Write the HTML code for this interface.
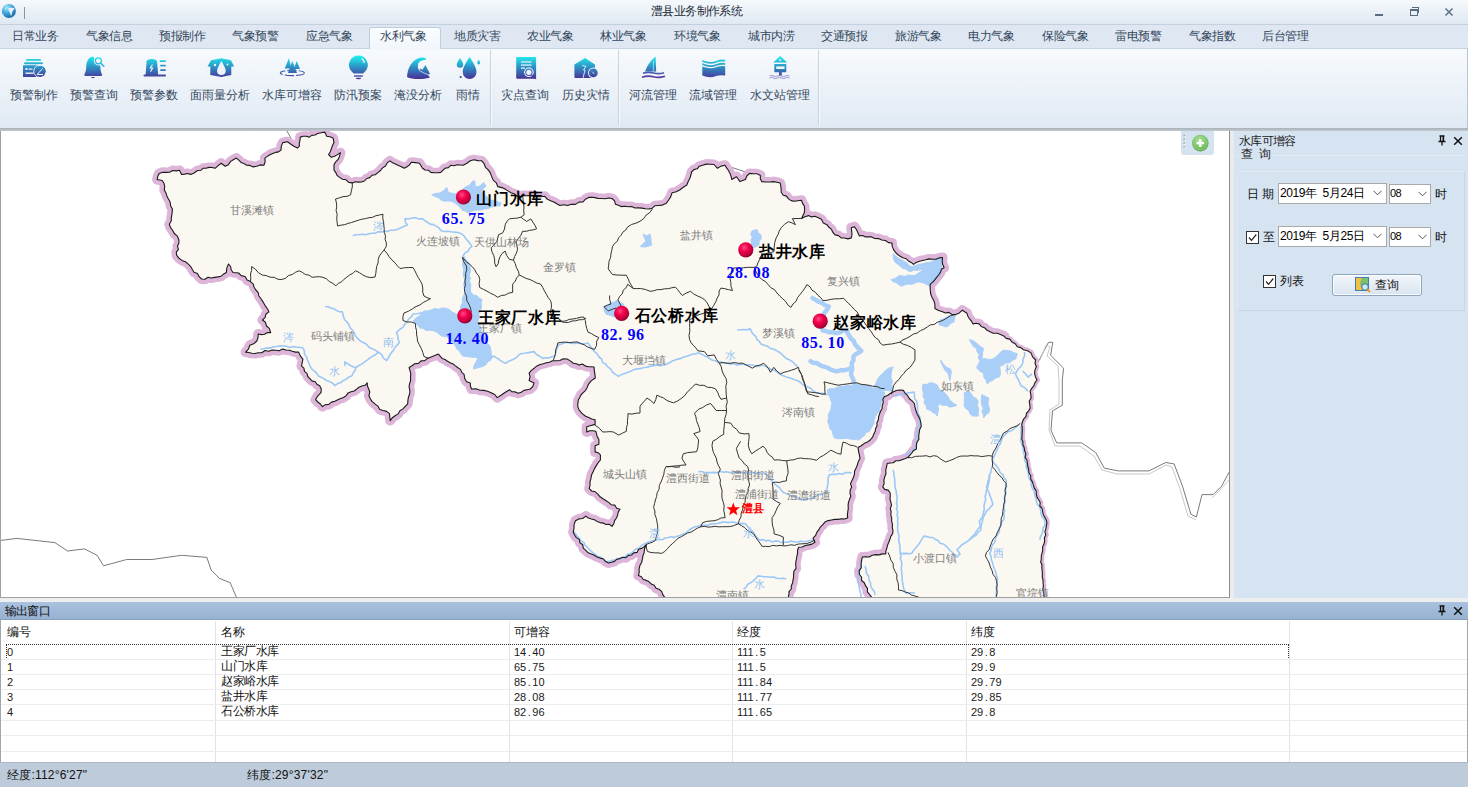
<!DOCTYPE html>
<html><head><meta charset="utf-8">
<style>
*{margin:0;padding:0;box-sizing:border-box}
html,body{width:1468px;height:787px;overflow:hidden;background:#fff;font-family:"Liberation Sans",sans-serif;font-size:12px;color:#1e2a3a}
.a{position:absolute;white-space:nowrap}
#title{left:0;top:0;width:1468px;height:25px;background:linear-gradient(#f6f9fc,#dfe8f2);border-bottom:1px solid #c3d0de}
#tabs{left:0;top:25px;width:1468px;height:23px;background:#dfe8f2}
.tab{top:28px;height:17px;line-height:17px;color:#33465c;font-size:12px;letter-spacing:-0.5px}
#acttab{left:369px;top:27px;width:72px;height:22px;background:linear-gradient(#fbfdff,#f1f6fb);border:1px solid #bfcddc;border-bottom:none;border-radius:3px 3px 0 0}
#ribbon{left:0;top:48px;width:1468px;height:81px;background:linear-gradient(#f7fafd,#e0e9f3);border-top:1px solid #c6d3e0;border-right:1px solid #b9c6d4}
.sep{top:50px;width:2px;height:76px;background:linear-gradient(90deg,#c9d4e0 50%,#f6f9fc 50%)}
.lbl{top:87px;height:17px;line-height:17px;color:#34475d;font-size:12px;text-align:center;width:80px;margin-left:-40px}
.ico{width:28px;height:28px;margin-left:-14px;top:54px}
#rbbot{left:0;top:128px;width:1468px;height:3px;background:linear-gradient(#a8b0b9,#c3c9cf)}
#map{left:0;top:131px;width:1230px;height:467px;background:#fff;border-left:1px solid #a0a0a0;border-bottom:1px solid #a0a0a0;border-right:1px solid #8c8c8c;overflow:hidden}
#rpanel{left:1230px;top:131px;width:238px;height:467px;background:#d6e3f1;border-left:4px solid #e9ecef}
#gap{left:0;top:598px;width:1468px;height:4px;background:#eceef0}
#outt{left:0;top:602px;width:1468px;height:18px;background:linear-gradient(#a9c2de,#97b1d1);border-bottom:1px solid #8a9fb8}
#tbl{left:0;top:620px;width:1468px;height:142px;background:#fff;border-left:1px solid #9ba7b4;border-right:1px solid #9ba7b4}
#status{left:0;top:762px;width:1468px;height:25px;background:#bdcbdb;border-top:1px solid #a9b7c6}
.cell{font-size:12px;color:#111;height:15px;line-height:15px}
.num{font-family:"Liberation Sans",sans-serif;font-size:11px;color:#1a1a1a;height:15px;line-height:15px;letter-spacing:0px}
.ml{font-size:11px;color:#7b7b7b}
.rl{font-size:16px;font-weight:bold;color:#000;font-family:"Liberation Serif",serif}
.rv{font-size:16px;font-weight:bold;color:#0000ff;font-family:"Liberation Serif",serif}
</style></head><body>
<div id="title" class="a"></div>
<div class="a" style="left:651px;top:3px;height:17px;line-height:17px;font-size:12px;color:#222c38;letter-spacing:-0.6px">澧县业务制作系统</div>
<svg class="a" style="left:1px;top:3px" width="16" height="16" viewBox="0 0 16 16"><defs><radialGradient id="gl" cx="0.35" cy="0.25" r="0.85"><stop offset="0" stop-color="#a8e6fc"/><stop offset="0.5" stop-color="#3aa3dc"/><stop offset="1" stop-color="#145d9a"/></radialGradient></defs><circle cx="7.9" cy="8" r="7" fill="url(#gl)"/><path d="M7.3 5.2 Q9.5 4.2 11.5 5 L13.6 4.4 Q13.4 6.3 12.3 7.2 Q11.2 8.4 10.9 10.2 Q10.6 12 10.1 13.1 Q9.3 11 8.8 9.7 Q8.6 8.6 7.9 8.1 Q6.9 7.3 7.6 6.4Z" fill="#f2f7fa" opacity="0.92"/><path d="M1.2 11 Q2.5 11.2 3.4 12.3 Q2.4 12.8 1.7 12.2Z" fill="#f2f7fa" opacity="0.8"/><circle cx="4.3" cy="6.2" r="0.6" fill="#e8f4fb" opacity="0.6"/></svg>
<div class="a" style="left:24px;top:7px;width:1px;height:12px;background:#8a96a3"></div>
<div class="a" style="left:1375px;top:14px;width:8px;height:2px;background:#5a6b7e"></div>
<div class="a" style="left:1410px;top:9px;width:8px;height:7px;border:1px solid #5a6b7e;border-top-width:2px"></div>
<div class="a" style="left:1412px;top:7px;width:7px;height:6px;border-top:1px solid #5a6b7e;border-right:1px solid #5a6b7e"></div>
<svg class="a" style="left:1444px;top:7px" width="10" height="10" viewBox="0 0 10 10"><path d="M1.5 1.5L8.5 8.5M8.5 1.5L1.5 8.5" stroke="#5f7186" stroke-width="1.5"/></svg>
<div id="tabs" class="a"></div>
<div id="acttab" class="a"></div>
<div class="a tab" style="left:12px">日常业务</div>
<div class="a tab" style="left:86px">气象信息</div>
<div class="a tab" style="left:159px">预报制作</div>
<div class="a tab" style="left:232px">气象预警</div>
<div class="a tab" style="left:306px">应急气象</div>
<div class="a tab" style="left:380px">水利气象</div>
<div class="a tab" style="left:454px">地质灾害</div>
<div class="a tab" style="left:527px">农业气象</div>
<div class="a tab" style="left:600px">林业气象</div>
<div class="a tab" style="left:674px">环境气象</div>
<div class="a tab" style="left:748px">城市内涝</div>
<div class="a tab" style="left:821px">交通预报</div>
<div class="a tab" style="left:895px">旅游气象</div>
<div class="a tab" style="left:968px">电力气象</div>
<div class="a tab" style="left:1042px">保险气象</div>
<div class="a tab" style="left:1115px">雷电预警</div>
<div class="a tab" style="left:1189px">气象指数</div>
<div class="a tab" style="left:1262px">后台管理</div>
<div id="ribbon" class="a"></div>
<div class="a lbl" style="left:34px">预警制作</div>
<div class="a lbl" style="left:94.3px">预警查询</div>
<div class="a lbl" style="left:154.3px">预警参数</div>
<div class="a lbl" style="left:220px">面雨量分析</div>
<div class="a lbl" style="left:292px">水库可增容</div>
<div class="a lbl" style="left:357.6px">防汛预案</div>
<div class="a lbl" style="left:418px">淹没分析</div>
<div class="a lbl" style="left:468px">雨情</div>
<div class="a lbl" style="left:525.3px">灾点查询</div>
<div class="a lbl" style="left:585.6px">历史灾情</div>
<div class="a lbl" style="left:653px">河流管理</div>
<div class="a lbl" style="left:713.3px">流域管理</div>
<div class="a lbl" style="left:779.7px">水文站管理</div>
<div class="a sep" style="left:490px"></div>
<div class="a sep" style="left:618px"></div>
<div class="a sep" style="left:818px"></div>
<svg class="a" style="left:0;top:0" width="830" height="128" viewBox="0 0 830 128">
<defs>
<linearGradient id="ig" x1="0" y1="0" x2="0" y2="1"><stop offset="0" stop-color="#1ff0ee"/><stop offset="0.5" stop-color="#2e8ec4"/><stop offset="1" stop-color="#4a2e94"/></linearGradient>
<linearGradient id="igu" gradientUnits="userSpaceOnUse" x1="0" y1="56" x2="0" y2="79"><stop offset="0" stop-color="#1ff0ee"/><stop offset="0.5" stop-color="#2e8ec4"/><stop offset="1" stop-color="#4a2e94"/></linearGradient>
</defs>
<g fill="url(#igu)">
<!-- 1 预警制作 -->
<rect x="26" y="59" width="15" height="1.8" rx="0.9"/>
<rect x="24" y="62.2" width="19" height="2" rx="1"/>
<path d="M23 65.2 H38 V77 H23 Z"/>
<circle cx="40.2" cy="71.3" r="5.6"/>
<g fill="#eef4fa"><rect x="25.5" y="68" width="2" height="2"/><rect x="28.5" y="68.5" width="4" height="1.2"/><rect x="25.5" y="72.5" width="8" height="1.4"/></g>
<path d="M37.3 74.3 L42.5 68.5 M37 74.5 H43" stroke="#eef4fa" stroke-width="1" fill="none"/>
<circle cx="40.2" cy="71.3" r="6.4" fill="none" stroke="#f2f6fb" stroke-width="0.9"/>
<!-- 2 预警查询 bell -->
<path d="M93 56.6 C88 57.5 86.5 62 86.3 66 C86.2 70 85.5 72.5 84.4 74.2 C84 75 84.5 75.9 85.5 75.9 H101 C102 75.9 102.4 75 102 74.2 C101 72.5 100.4 70 100.3 66 Z"/>
<path d="M91 77 H95 C94.5 78.5 91.5 78.5 91 77Z"/>
<circle cx="98.4" cy="60.8" r="4.6" fill="#f2f6fb"/>
<circle cx="98.4" cy="60.8" r="3.6"/>
<circle cx="98.4" cy="60.8" r="2.4" fill="#f2f6fb"/>
<path d="M100.8 63.2 L104.3 66.7" stroke="#2ab6d6" stroke-width="1.6"/>
<!-- 3 预警参数 -->
<path d="M145.6 75 L146.5 62 C146.8 59.8 148.5 59 151.8 59 C155 59 156.8 59.8 157.1 62 L158.2 75 Z"/>
<rect x="143.5" y="74.6" width="22.5" height="1.9" rx="0.9"/>
<rect x="159.6" y="60.3" width="6.4" height="1.7" rx="0.8"/>
<rect x="160" y="64.7" width="6" height="1.7" rx="0.8"/>
<rect x="160" y="69.2" width="6" height="1.7" rx="0.8"/>
<path d="M152.5 64.5 L150.3 68 L152.6 68 L150.5 71.8" stroke="#eef4fa" stroke-width="1.1" fill="none"/>
<!-- 4 面雨量分析 -->
<path d="M207.5 66.5 L211 60.2 L221.4 58.3 L231 60.2 L234.2 66.5 L231.3 66.5 L231.3 75 L221.4 77 L210.3 75 L210.3 66.5 Z"/>
<path d="M221.4 61 C219 65.5 217 68.5 217 71 C217 73.5 219 75 221.4 75 C223.8 75 225.8 73.5 225.8 71 C225.8 68.5 223.8 65.5 221.4 61Z" fill="#eef4fa"/>
<circle cx="215" cy="65" r="1.2" fill="#eef4fa"/><circle cx="227.5" cy="64.5" r="1" fill="#eef4fa"/>
<!-- 5 水库可增容 trees -->
<path d="M288.9 58.3 L284.7 68.5 H291.5 Z"/>
<path d="M296.7 61 L293.7 69 H300 Z"/>
<path d="M292.3 61 L288 73 H297 Z"/>
<ellipse cx="292.3" cy="73" rx="12" ry="2.6" fill="none" stroke="url(#igu)" stroke-width="1.1" stroke-dasharray="9 2"/>
<!-- 6 防汛预案 bulb -->
<path d="M358.4 55.5 A9.4 9.4 0 0 1 365.5 71 L363.2 73.4 H353.6 L351.3 71 A9.4 9.4 0 0 1 358.4 55.5Z"/>
<rect x="354" y="75.3" width="8.9" height="1.4"/>
<path d="M356 77.8 H361 V78.5 C360 79.6 357 79.6 356 78.5Z"/>
<path d="M361.5 58.7 Q364.2 60 364.3 63" stroke="#f2f6fb" stroke-width="1.2" fill="none"/>
<!-- 7 淹没分析 wave -->
<path d="M407 77 C407.5 68 412 59 421 57.5 C424 57 426.5 58.2 426.2 59.6 C424 60.2 420 60.5 418.2 63.5 C417.6 66 417.8 68.5 419 70 L421 68.5 L422.2 70 L425.5 65 L430 74 L428 75 L430 77.5 C422 79.8 412 79.5 407 77Z"/>
<path d="M419 70.3 Q424 73.5 429.5 75.2" stroke="#eef4fa" stroke-width="0.7" fill="none"/>
<!-- 8 雨情 -->
<path d="M469.6 56.9 C466 62.5 462.7 67.5 462.7 72 A6.9 6.9 0 0 0 476.5 72 C476.5 67.5 473.2 62.5 469.6 56.9Z"/>
<path d="M460 58 C458.5 60.5 456.8 62.5 456.8 64.5 A3.2 3.2 0 0 0 463.2 64.5 C463.2 62.5 461.5 60.5 460 58Z"/>
<path d="M478.7 59.8 C478 61 477.3 62 477.3 63 A1.4 1.4 0 0 0 480.1 63 C480.1 62 479.4 61 478.7 59.8Z"/>
<circle cx="460.7" cy="77" r="1.1"/>
<!-- 9 灾点查询 -->
<rect x="516.2" y="56.9" width="19.9" height="21.9" rx="1.2"/>
<g fill="#dff0f8"><rect x="521" y="61.3" width="10.5" height="1.3"/><rect x="521" y="64.4" width="10.5" height="1.3"/><rect x="521" y="67.5" width="4" height="1.3"/></g>
<circle cx="528.9" cy="72.3" r="4.8" fill="#eef4fa"/>
<circle cx="528.9" cy="72.3" r="3.7"/>
<circle cx="528.9" cy="72.3" r="2.6" fill="#eef4fa"/>
<path d="M531.5 75 L536 78.8" stroke="#4a3a96" stroke-width="1.4"/>
<!-- 10 历史灾情 -->
<path d="M585 58 L595 64.5 V76.5 C595 77.5 594.5 78 593.5 78 H575.8 C574.9 78 574.4 77.5 574.4 76.5 V64.5 Z"/>
<circle cx="593.3" cy="72.9" r="5.3" fill="#eef4fa"/>
<circle cx="593.3" cy="72.9" r="4.4"/>
<path d="M582.3 65.5 L586 66.3 L583.5 70 L585 70.3 L583 77.8" stroke="#eef4fa" stroke-width="0.9" fill="none"/>
<path d="M592 71.5 L594.3 74" stroke="#eef4fa" stroke-width="0.8"/>
<!-- 11 河流管理 sailboat -->
<path d="M655.6 56.6 L656.2 71.5 H645 C647 66 650.5 60.5 655.6 56.6Z"/>
<path d="M653.5 61 L653.3 71" stroke="#dff1f8" stroke-width="0.8" opacity="0.8"/>
<path d="M643 73.3 Q648 71.5 653.5 73 Q659 74.5 664 72.8" stroke="#4a5cb0" stroke-width="1.7" fill="none"/>
<path d="M642 77.2 Q648 75.2 653.5 76.8 Q659 78.3 665 76.3" stroke="#5a3ca0" stroke-width="1.7" fill="none"/>
<!-- 12 流域管理 -->
<path d="M702.3 60 Q710 63.5 716 61 Q721 59 725.2 59.8 V61.6 Q720 61 716 62.8 Q710 65.2 702.3 62Z"/>
<path d="M702.3 63.2 Q710 66.5 716 64.2 Q721 62.3 725.2 63 V64.8 Q720 64.2 716 66 Q710 68.3 702.3 65Z"/>
<path d="M702.3 66.5 Q710 69.6 716 67.3 Q721 65.5 725.2 66.2 V75.5 Q720 74.8 716 76 Q710 78.8 702.3 75.5Z"/>
<!-- 13 水文站管理 -->
<path d="M780.2 56 L787.2 62.5 H773.2 Z"/>
<circle cx="780.2" cy="60" r="1" fill="#eef4fa"/>
<rect x="774.3" y="64" width="12" height="8.2" rx="0.6"/>
<rect x="776.2" y="66.4" width="8.4" height="2.6" fill="#eef4fa"/>
<rect x="779" y="72" width="2.8" height="3.5"/>
<path d="M769.5 76 Q771.5 74.8 773.5 76 T777.5 76 T781.5 76 T785.5 76 T789.5 76" stroke="#7a6cc0" stroke-width="0.9" fill="none" opacity="0.8"/>
<path d="M769.5 78 Q771.5 76.8 773.5 78 T777.5 78 T781.5 78 T785.5 78 T789.5 78" stroke="#7a6cc0" stroke-width="0.9" fill="none" opacity="0.8"/>
</g>
</svg>
<div id="rbbot" class="a"></div>
<div class="a" style="left:370px;top:47px;width:70px;height:3px;background:#f3f7fb"></div>
<div id="map" class="a"></div>
<svg class="a" style="left:1px;top:131px" width="1228" height="466" viewBox="1 131 1228 466">
<defs><radialGradient id="ball" cx="0.38" cy="0.35" r="0.8" fx="0.4" fy="0.35"><stop offset="0" stop-color="#ff4a80"/><stop offset="0.35" stop-color="#f2004c"/><stop offset="0.7" stop-color="#b8003a"/><stop offset="1" stop-color="#5a0018"/></radialGradient></defs>
<polyline points="0.0,540.5 16.9,538.4 54.9,542.6 67.6,551.0 84.5,548.9 97.1,555.3 103.5,565.8 126.7,559.5 152.0,559.5 181.6,555.3 206.9,557.4 211.1,570.0 219.6,578.5 230.2,582.7 236.5,597.5" fill="none" stroke="#7a7a7a" stroke-width="1"/>
<polyline points="1037.7,362.8 1048.5,342.3 1052.8,342.3 1050.6,355.3 1063.6,368.2 1062.3,380.0 1062.3,405.2 1052.5,410.8 1051.0,430.3 1056.7,442.9 1081.8,442.9 1095.8,452.7 1104.2,468.1 1118.2,470.9 1148.9,470.9 1165.7,462.5 1174.1,463.9 1182.5,486.2 1190.9,514.2 1196.4,517.0 1202.0,494.6 1213.2,494.6 1221.6,486.2 1229.0,472.3" fill="none" stroke="#7a7a7a" stroke-width="1"/>
<polyline points="286.9,131.0 291.2,138.6" fill="none" stroke="#7a7a7a" stroke-width="1"/>
<polyline points="725.0,165.2 761.0,177.0" fill="none" stroke="#7a7a7a" stroke-width="1"/>
<polyline points="334.0,170.1 337.0,177.0 341.0,181.0 347.0,183.5" fill="none" stroke="#7a7a7a" stroke-width="1"/>
<polyline points="1040.0,360.0 1046.0,345.0 1050.0,347.0 1047.0,356.0 1058.0,366.0 1059.0,380.0 1059.0,404.0 1050.0,410.0 1049.0,430.0 1055.0,446.0 1080.0,446.0 1094.0,456.0 1102.0,470.0 1117.0,474.0 1149.0,474.0 1166.0,465.0 1172.0,467.0 1180.0,489.0 1188.0,516.0 1196.0,520.0" fill="none" stroke="#c8c8c8" stroke-width="1"/>
<polyline points="1212.0,498.0 1220.0,490.0 1229.0,480.0" fill="none" stroke="#c8c8c8" stroke-width="1"/>
<polyline points="1043.7,602.7 1045.3,606.3 1045.0,610.0 1042.0,609.9 1039.0,609.1 1035.9,609.3 1032.9,610.7 1029.9,610.8 1026.9,610.1 1023.8,610.9 1020.8,610.5 1017.8,610.9 1014.8,609.7 1011.7,609.4 1008.7,609.2 1005.7,610.7 1002.7,609.6 999.6,609.7 996.6,610.7 993.6,609.2 990.6,609.1 987.5,610.6 984.5,609.1 981.5,610.2 978.5,610.0 975.4,609.0 972.4,609.3 969.4,610.7 966.4,610.1 963.3,610.0 960.3,610.3 957.3,610.6 954.3,610.4 951.2,609.6 948.2,611.0 945.2,609.9 942.2,610.1 939.1,611.0 936.1,610.3 933.1,609.8 930.1,610.0 927.0,610.9 924.0,609.0 921.0,609.4 918.0,609.1 914.9,610.8 911.9,610.5 908.9,610.9 905.9,609.4 902.8,610.5 899.8,610.7 896.8,610.2 893.8,609.2 890.7,609.4 887.7,610.5 884.7,610.7 881.7,609.2 878.6,609.9 875.6,609.6 872.6,610.0 871.8,606.7 871.7,603.3 872.6,600.0 871.5,597.0 869.5,594.4 867.4,591.9 867.5,588.3 865.5,585.7 864.3,582.7 861.6,580.5 861.5,577.0 859.4,574.5 859.1,570.9 861.3,567.6 861.1,564.0 861.5,560.4 862.4,557.0 865.7,556.7 869.2,557.0 872.3,555.3 875.6,554.6 879.0,554.9 882.3,553.9 885.7,554.0 885.9,550.9 886.9,548.0 887.6,545.0 888.8,542.2 889.9,539.3 890.8,536.4 892.6,533.8 893.0,530.7 892.3,527.6 892.5,524.4 891.6,521.2 891.7,518.1 890.8,514.9 891.1,511.7 890.3,508.6 891.5,505.3 890.9,502.2 890.0,499.1 890.3,495.9 890.1,492.7 888.2,490.1 884.7,489.4 882.8,486.9 884.1,483.7 883.9,480.2 884.7,476.9 886.0,473.7 885.7,470.1 886.6,466.8 887.2,463.5 890.2,463.0 893.3,462.7 895.9,460.7 899.0,460.8 901.9,459.7 904.8,458.7 907.6,457.6 909.7,455.3 911.8,453.0 913.6,450.4 916.4,448.9 916.4,445.5 916.9,442.3 918.9,439.4 918.7,435.9 919.2,432.7 919.7,429.4 921.2,426.4 920.9,422.9 920.0,419.6 918.6,416.5 916.9,413.4 915.8,410.2 915.0,406.9 914.4,403.5 912.1,400.9 909.4,398.7 907.7,395.7 905.2,393.3 903.3,390.4 899.7,390.0 896.3,390.5 893.0,391.9 890.2,393.4 887.6,395.5 884.6,396.6 882.8,399.2 883.3,402.5 882.3,405.4 882.1,408.5 880.5,411.2 879.5,414.0 878.6,416.9 878.3,420.0 876.9,422.7 877.0,425.9 875.6,428.6 875.1,431.6 873.6,434.4 872.6,437.2 870.2,440.0 867.3,442.1 864.1,443.6 861.2,445.8 858.0,447.4 858.5,451.1 859.3,454.7 860.0,458.4 858.4,461.4 857.4,464.7 856.1,467.9 854.6,471.0 854.4,474.5 853.3,477.8 851.8,480.9 850.5,483.8 851.7,487.1 850.2,490.0 850.0,493.1 850.8,496.3 849.5,499.3 848.5,502.3 848.1,505.4 848.3,508.5 847.8,511.5 847.4,514.6 847.7,517.7 844.6,519.0 841.3,518.8 838.1,519.4 834.7,519.4 831.5,520.0 828.3,520.6 825.2,521.8 823.0,524.4 820.5,526.8 818.8,529.7 816.8,532.4 815.5,535.7 813.0,538.1 815.0,542.2 812.0,544.1 808.7,544.9 805.3,545.5 802.2,547.0 798.7,547.3 797.5,550.2 797.6,553.2 796.9,556.2 796.4,559.2 795.8,562.2 795.7,565.2 796.1,568.4 794.0,571.1 793.6,574.1 793.6,577.1 793.0,580.1 792.6,583.1 791.3,585.8 791.3,589.0 789.1,591.4 788.9,594.5 788.2,597.5 786.4,600.0 786.9,603.3 785.9,606.7 786.4,610.0 783.4,610.6 780.3,609.5 777.3,609.0 774.2,610.0 771.2,610.2 768.1,610.0 765.1,609.6 762.1,609.5 759.0,609.8 756.0,609.7 752.9,610.8 749.9,610.7 746.8,610.5 743.8,609.5 740.8,610.4 737.7,609.9 734.7,611.0 731.6,610.9 728.6,610.5 725.5,609.7 722.5,609.6 719.5,609.6 716.4,610.4 713.4,610.0 710.3,610.1 707.3,610.1 704.3,610.8 701.2,609.2 698.2,610.6 695.1,609.0 692.1,609.1 689.0,611.0 686.0,610.1 683.0,609.4 679.9,609.1 676.9,610.1 673.8,610.5 670.8,610.6 667.7,609.1 664.7,610.0 664.1,606.8 664.9,603.6 664.0,600.5 664.7,597.3 662.8,594.6 661.6,591.4 659.0,589.3 656.0,588.2 654.2,585.3 651.3,584.1 649.1,581.8 646.4,580.4 643.3,579.5 641.4,576.7 638.4,575.6 639.2,572.3 639.1,568.8 639.9,565.5 641.6,562.5 642.4,559.2 642.9,555.9 644.1,552.7 644.6,548.5 646.4,544.7 644.1,546.7 641.6,548.4 638.6,549.3 637.0,552.4 633.7,552.9 631.5,555.0 628.4,555.4 626.0,557.7 622.6,557.2 619.9,558.6 616.9,559.2 614.5,561.4 611.5,562.2 608.6,563.0 605.6,561.6 603.4,559.0 600.1,558.1 597.1,556.9 594.3,555.3 591.3,553.9 588.2,552.8 585.8,550.4 583.3,548.2 582.8,544.8 580.0,542.8 579.3,539.4 576.4,537.6 574.6,535.0 573.2,532.1 574.0,528.3 574.1,524.4 575.5,520.7 578.8,518.9 582.7,518.5 585.8,516.1 588.4,518.0 591.4,519.0 594.4,519.8 597.1,521.4 600.0,522.6 603.2,523.1 606.0,524.5 609.4,524.4 612.0,526.4 613.8,523.7 614.6,520.6 616.5,518.0 617.6,515.1 618.3,511.9 620.0,509.2 616.7,508.3 614.7,505.1 611.1,504.7 608.6,502.4 605.8,500.5 602.9,498.7 600.1,496.8 597.8,494.1 595.3,491.8 591.7,491.0 589.2,488.6 590.1,485.2 590.0,481.7 591.0,478.3 591.5,474.9 593.1,471.8 594.5,468.6 596.3,465.6 598.1,462.7 600.4,460.0 600.4,454.9 598.1,452.7 595.1,451.9 595.1,448.9 595.1,445.8 598.9,444.2 598.9,439.7 596.9,435.7 595.9,431.3 592.8,430.7 589.7,430.8 586.7,432.0 586.7,426.7 590.9,425.5 595.1,424.4 595.1,419.8 591.7,419.0 588.7,417.5 585.6,416.3 582.9,414.1 580.6,411.9 578.7,409.2 577.7,406.2 577.9,403.1 578.3,400.0 579.5,398.0 580.9,395.0 583.2,392.6 585.6,390.3 587.2,387.4 588.4,384.3 590.4,381.7 592.7,379.7 595.3,378.0 594.9,374.3 594.3,370.7 594.1,367.0 591.1,366.8 588.0,366.8 585.1,365.9 582.4,364.0 579.1,365.1 576.3,363.8 573.3,363.3 570.3,360.9 567.1,359.0 563.3,358.7 559.8,360.5 556.1,360.8 552.4,360.8 549.5,362.2 546.4,362.8 543.3,363.7 540.2,364.5 536.9,365.9 534.2,368.2 531.4,370.4 529.1,373.1 530.1,376.8 529.1,380.5 534.0,382.9 532.9,386.4 530.3,389.0 527.1,389.7 523.9,390.4 521.2,392.3 518.1,393.3 515.3,391.9 512.0,391.8 509.5,389.7 504.6,392.7 501.0,395.3 497.2,397.6 494.7,394.5 491.1,392.7 487.6,391.3 483.9,390.4 480.1,390.3 475.9,388.7 471.5,389.0 470.4,386.0 470.3,382.9 466.6,381.7 464.6,378.3 464.1,374.3 461.7,372.3 460.5,369.4 457.9,367.8 455.4,365.9 453.1,363.9 450.2,362.7 447.5,361.3 445.0,359.5 442.1,358.4 438.4,354.1 434.8,355.6 431.0,356.9 427.4,358.4 424.8,360.7 421.0,360.9 418.5,363.4 414.8,363.7 412.0,365.7 409.1,367.5 410.0,370.7 410.8,373.9 410.5,377.3 410.6,380.7 409.5,383.9 409.1,387.2 409.9,390.6 409.6,394.0 408.4,397.2 407.9,400.5 407.7,403.8 405.3,406.3 402.9,408.9 399.9,410.7 398.1,413.9 395.1,415.8 392.3,417.8 390.2,420.6 389.8,417.1 389.5,413.6 386.6,411.4 383.1,410.5 379.7,409.4 377.9,406.1 374.8,403.9 372.0,401.4 370.0,398.3 368.9,395.3 369.8,392.0 368.7,389.0 367.4,386.0 367.2,382.9 365.0,385.3 361.9,386.0 359.0,387.2 356.6,389.1 354.1,391.0 351.0,391.8 348.1,392.9 346.1,395.6 343.6,397.5 340.6,398.5 337.8,399.7 334.8,401.2 331.5,402.1 328.8,404.4 325.2,404.7 322.4,406.6 320.4,404.0 317.8,402.0 315.5,399.7 317.8,395.8 321.0,392.7 321.3,389.0 319.7,385.7 317.0,384.3 315.2,381.7 312.0,380.9 309.9,378.7 307.8,376.5 307.0,373.4 304.5,371.4 303.9,368.1 301.5,366.1 302.2,362.6 302.9,359.1 300.3,355.9 298.7,352.1 295.5,352.1 292.4,351.2 289.3,350.2 286.1,350.0 282.6,349.1 279.1,350.7 275.6,350.2 272.1,350.0 268.7,351.3 265.0,350.5 261.8,352.8 258.2,352.8 255.0,353.5 251.9,353.3 248.7,352.5 245.6,352.1 248.4,349.1 249.8,345.2 253.7,343.8 256.8,341.0 258.0,337.6 258.2,334.0 261.4,334.6 264.5,334.2 267.5,332.6 270.7,332.6 269.3,328.4 266.5,326.0 265.4,322.2 262.4,320.0 265.0,317.6 266.0,314.0 268.9,311.9 267.6,309.0 265.6,306.4 264.1,303.7 262.4,300.9 260.6,298.3 258.8,295.7 258.1,292.4 255.8,290.0 254.1,287.2 253.1,283.8 250.5,281.6 247.1,280.1 245.1,276.5 241.2,275.6 238.6,273.0 233.0,272.5 231.2,269.8 230.6,266.5 228.5,264.0 226.8,268.1 226.4,272.5 223.6,274.1 221.1,276.2 217.8,276.9 214.6,277.4 211.4,278.0 208.0,277.3 204.9,279.2 201.6,279.0 199.1,276.7 197.5,273.5 194.0,272.3 192.2,269.3 190.5,266.3 188.1,263.9 185.4,261.8 182.0,260.4 179.0,258.2 176.7,255.3 176.3,252.1 178.4,249.3 177.5,246.1 178.9,243.1 178.9,240.0 177.4,236.2 174.3,233.5 172.4,230.0 170.4,227.3 169.3,224.2 171.2,220.9 171.4,217.1 172.1,213.1 172.4,209.0 170.6,205.8 170.1,202.0 168.3,198.8 166.9,195.9 165.8,192.8 164.3,190.0 164.7,186.4 164.0,183.3 162.2,180.5 157.1,179.5 157.8,176.3 159.2,173.4 162.7,172.2 166.3,172.4 169.6,172.2 172.8,170.5 176.2,170.9 179.5,170.3 181.5,174.4 184.6,174.1 187.6,173.5 190.7,174.4 194.1,173.0 197.1,170.8 200.8,170.3 202.9,168.3 205.9,168.2 209.0,167.4 212.1,167.5 215.1,168.3 218.1,165.6 221.2,163.2 225.2,166.3 228.4,164.8 230.4,161.6 233.3,159.7 236.4,158.1 238.8,160.1 241.0,162.4 244.0,163.6 246.6,165.2 250.0,165.4 253.2,166.9 256.7,166.3 260.2,164.9 263.9,165.2 265.1,161.7 264.9,158.1 267.4,156.4 269.9,154.8 272.6,153.4 275.5,152.4 278.6,151.9 281.0,150.0 281.3,146.1 282.8,142.6 287.4,141.7 290.6,144.0 293.9,146.2 297.4,148.1 299.3,146.3 299.3,143.2 300.0,140.2 300.2,137.1 303.2,136.2 306.3,136.2 309.3,137.1 311.8,135.4 315.0,135.0 317.6,133.5 321.2,132.7 324.9,132.1 326.7,136.2 330.0,136.8 333.1,138.1 334.0,142.6 332.5,145.5 331.4,148.6 330.3,151.7 328.6,154.5 331.3,157.3 334.6,156.3 337.5,154.6 340.4,152.7 339.5,156.4 338.1,159.4 335.7,161.8 334.0,164.6 334.0,170.1 335.8,172.6 337.1,175.4 339.5,177.4 342.5,179.2 346.1,179.8 348.7,182.4 352.3,182.9 355.3,181.8 358.4,182.1 361.5,182.0 364.5,181.0 366.7,178.5 369.7,177.6 372.0,175.3 375.2,174.7 377.9,172.6 380.5,170.5 382.6,167.9 385.5,166.0 387.2,162.9 389.9,160.9 392.6,162.7 395.5,164.0 398.4,165.5 401.4,166.7 404.2,168.3 407.0,166.8 409.5,164.9 411.3,162.2 415.4,162.6 419.5,163.2 422.5,168.3 425.1,170.0 428.4,170.2 430.7,172.4 434.1,172.8 437.4,172.7 440.8,172.4 444.9,168.3 448.4,167.6 451.0,165.2 454.1,165.8 457.1,164.8 460.1,165.0 463.2,165.2 466.9,163.2 470.3,160.7 474.0,159.7 477.8,160.6 481.5,160.7 484.1,163.7 485.5,167.3 488.2,169.9 490.3,172.9 491.6,176.4 493.2,180.1 496.3,182.8 497.7,186.6 502.0,187.6 505.9,189.6 510.9,192.7 514.0,193.8 516.7,196.0 520.0,196.7 523.2,195.5 526.7,195.8 530.0,195.5 533.7,195.8 537.3,196.6 541.0,196.7 544.7,196.2 547.1,199.1 550.5,200.8 553.8,202.0 556.8,203.8 559.8,205.5 563.6,204.8 567.6,205.5 571.4,204.3 575.4,204.4 579.0,202.1 583.0,202.0 585.4,199.2 588.7,197.4 591.9,197.2 595.0,197.6 598.0,198.5 601.5,198.5 605.0,198.7 608.5,198.0 612.0,198.5 614.6,200.9 615.4,204.3 618.4,205.3 621.2,206.6 624.7,206.3 628.1,206.7 631.6,206.6 635.0,208.0 638.5,207.9 642.0,208.1 645.5,208.8 649.0,209.0 652.2,208.2 654.8,205.8 658.2,205.5 662.5,205.1 666.3,203.2 668.7,200.0 670.8,196.6 672.1,192.7 676.3,191.8 680.0,189.7 683.3,187.2 686.8,185.0 688.3,181.2 690.2,177.5 691.6,172.0 693.9,169.6 697.2,168.8 699.3,166.2 702.5,165.2 706.3,164.1 710.1,164.2 714.0,164.5 717.5,168.3 721.0,166.1 725.0,165.2 726.6,167.9 728.5,170.5 730.0,173.4 731.1,176.3 731.8,179.5 736.5,176.8 740.0,181.6 745.4,179.5 746.8,176.0 749.5,173.4 753.2,173.8 756.9,173.8 760.4,175.4 760.3,178.7 761.7,181.6 765.8,182.0 770.0,182.0 773.5,181.6 776.8,182.2 780.2,183.0 780.8,186.0 781.1,189.1 781.2,192.2 783.2,195.2 786.4,196.1 788.5,198.9 791.1,200.6 794.4,201.3 797.9,200.7 801.5,200.3 802.6,203.4 804.4,206.2 804.6,209.5 804.3,212.8 802.8,215.7 801.5,218.6 804.9,216.7 808.6,215.6 811.5,216.9 814.9,216.3 817.8,217.6 821.4,219.2 823.3,223.0 826.9,224.7 828.9,227.3 831.5,229.4 832.9,232.4 835.0,234.9 838.5,235.6 841.1,237.9 844.5,238.0 847.9,238.9 851.3,237.9 852.0,234.5 851.7,231.2 851.3,227.8 854.3,226.7 856.4,229.5 857.9,232.7 859.4,235.9 862.5,235.5 865.5,236.9 868.5,236.7 871.6,236.9 874.8,238.5 878.5,238.6 881.8,240.0 885.4,240.5 888.4,242.6 892.0,243.0 892.2,246.4 893.5,249.4 895.3,252.2 897.6,254.5 900.2,256.2 902.9,257.8 906.1,258.7 908.4,260.9 911.1,262.4 913.6,264.4 916.3,262.4 919.4,261.2 922.6,260.5 925.8,259.8 929.1,258.9 932.5,259.3 935.9,259.3 939.1,257.9 942.5,257.5 942.2,261.0 942.6,264.3 944.1,267.5 941.4,269.3 940.4,272.4 938.6,275.0 936.6,277.4 934.7,279.8 932.7,282.2 930.3,284.2 930.1,287.2 930.3,290.3 930.7,294.0 932.0,297.4 933.8,300.6 934.9,304.1 934.9,308.6 938.6,310.4 942.5,311.7 945.4,313.0 948.8,312.4 951.6,314.3 954.7,314.7 959.0,313.2 962.4,310.2 966.9,313.2 967.9,316.2 969.5,318.8 971.5,321.2 973.0,323.9 976.0,323.3 979.1,323.9 981.3,326.4 984.4,327.7 986.8,330.0 990.0,331.7 993.3,333.2 997.1,333.3 1000.5,334.6 1003.7,335.9 1006.2,338.4" fill="none" stroke="#dcb5d8" stroke-width="10" stroke-linejoin="round"/>
<polyline points="1006.2,338.4 1009.7,339.1 1011.9,342.0 1015.2,343.8 1017.3,346.8 1020.7,347.6 1023.4,349.8 1027.5,350.7 1031.0,352.9 1032.6,356.9 1035.6,360.0 1035.0,363.4 1036.3,366.8 1034.9,370.1 1034.6,373.5 1035.5,376.9 1037.0,380.0 1035.0,382.6 1033.8,385.8 1031.7,388.3 1030.1,391.2 1030.8,394.6 1031.1,397.9 1029.2,401.3 1029.8,404.6 1030.1,408.0 1028.7,410.8 1026.5,413.2 1026.0,416.4 1023.8,418.8 1022.5,421.6 1021.7,424.7 1022.3,428.2 1022.2,431.7 1022.1,435.2 1021.7,438.7 1022.9,441.7 1022.9,444.9 1024.3,447.8 1024.7,451.0 1025.9,453.9 1025.1,457.4 1026.9,460.2 1027.4,463.3 1027.8,466.5 1028.7,469.5 1028.9,472.8 1030.7,475.7 1030.7,479.0 1032.4,481.9 1033.3,485.0 1034.3,488.1 1036.2,490.9 1036.3,494.3 1037.1,497.4 1038.8,500.0 1040.2,502.6 1039.8,506.0 1042.1,508.4 1042.6,511.4 1043.2,514.4 1044.6,517.0 1046.1,519.7 1046.9,522.6 1046.4,525.6 1045.9,528.6 1044.9,531.6 1045.8,534.8 1044.4,537.7 1044.6,540.8 1044.1,543.8 1042.6,546.7 1042.7,549.8 1042.1,552.8 1041.3,555.8 1041.3,558.9 1040.7,562.0 1041.9,565.0 1041.8,568.0 1042.2,571.0 1042.4,574.1 1042.3,577.1 1043.0,580.1 1043.1,583.2 1043.4,586.2 1042.8,589.3 1043.5,592.3 1044.1,595.3 1043.6,599.0 1043.7,602.7" fill="none" stroke="#dcb5d8" stroke-width="6" stroke-linejoin="round"/>
<polygon points="157.1,179.5 157.8,176.3 159.2,173.4 162.7,172.2 166.3,172.4 169.6,172.2 172.8,170.5 176.2,170.9 179.5,170.3 181.5,174.4 184.6,174.1 187.6,173.5 190.7,174.4 194.1,173.0 197.1,170.8 200.8,170.3 202.9,168.3 205.9,168.2 209.0,167.4 212.1,167.5 215.1,168.3 218.1,165.6 221.2,163.2 225.2,166.3 228.4,164.8 230.4,161.6 233.3,159.7 236.4,158.1 238.8,160.1 241.0,162.4 244.0,163.6 246.6,165.2 250.0,165.4 253.2,166.9 256.7,166.3 260.2,164.9 263.9,165.2 265.1,161.7 264.9,158.1 267.4,156.4 269.9,154.8 272.6,153.4 275.5,152.4 278.6,151.9 281.0,150.0 281.3,146.1 282.8,142.6 287.4,141.7 290.6,144.0 293.9,146.2 297.4,148.1 299.3,146.3 299.3,143.2 300.0,140.2 300.2,137.1 303.2,136.2 306.3,136.2 309.3,137.1 311.8,135.4 315.0,135.0 317.6,133.5 321.2,132.7 324.9,132.1 326.7,136.2 330.0,136.8 333.1,138.1 334.0,142.6 332.5,145.5 331.4,148.6 330.3,151.7 328.6,154.5 331.3,157.3 334.6,156.3 337.5,154.6 340.4,152.7 339.5,156.4 338.1,159.4 335.7,161.8 334.0,164.6 334.0,170.1 335.8,172.6 337.1,175.4 339.5,177.4 342.5,179.2 346.1,179.8 348.7,182.4 352.3,182.9 355.3,181.8 358.4,182.1 361.5,182.0 364.5,181.0 366.7,178.5 369.7,177.6 372.0,175.3 375.2,174.7 377.9,172.6 380.5,170.5 382.6,167.9 385.5,166.0 387.2,162.9 389.9,160.9 392.6,162.7 395.5,164.0 398.4,165.5 401.4,166.7 404.2,168.3 407.0,166.8 409.5,164.9 411.3,162.2 415.4,162.6 419.5,163.2 422.5,168.3 425.1,170.0 428.4,170.2 430.7,172.4 434.1,172.8 437.4,172.7 440.8,172.4 444.9,168.3 448.4,167.6 451.0,165.2 454.1,165.8 457.1,164.8 460.1,165.0 463.2,165.2 466.9,163.2 470.3,160.7 474.0,159.7 477.8,160.6 481.5,160.7 484.1,163.7 485.5,167.3 488.2,169.9 490.3,172.9 491.6,176.4 493.2,180.1 496.3,182.8 497.7,186.6 502.0,187.6 505.9,189.6 510.9,192.7 514.0,193.8 516.7,196.0 520.0,196.7 523.2,195.5 526.7,195.8 530.0,195.5 533.7,195.8 537.3,196.6 541.0,196.7 544.7,196.2 547.1,199.1 550.5,200.8 553.8,202.0 556.8,203.8 559.8,205.5 563.6,204.8 567.6,205.5 571.4,204.3 575.4,204.4 579.0,202.1 583.0,202.0 585.4,199.2 588.7,197.4 591.9,197.2 595.0,197.6 598.0,198.5 601.5,198.5 605.0,198.7 608.5,198.0 612.0,198.5 614.6,200.9 615.4,204.3 618.4,205.3 621.2,206.6 624.7,206.3 628.1,206.7 631.6,206.6 635.0,208.0 638.5,207.9 642.0,208.1 645.5,208.8 649.0,209.0 652.2,208.2 654.8,205.8 658.2,205.5 662.5,205.1 666.3,203.2 668.7,200.0 670.8,196.6 672.1,192.7 676.3,191.8 680.0,189.7 683.3,187.2 686.8,185.0 688.3,181.2 690.2,177.5 691.6,172.0 693.9,169.6 697.2,168.8 699.3,166.2 702.5,165.2 706.3,164.1 710.1,164.2 714.0,164.5 717.5,168.3 721.0,166.1 725.0,165.2 726.6,167.9 728.5,170.5 730.0,173.4 731.1,176.3 731.8,179.5 736.5,176.8 740.0,181.6 745.4,179.5 746.8,176.0 749.5,173.4 753.2,173.8 756.9,173.8 760.4,175.4 760.3,178.7 761.7,181.6 765.8,182.0 770.0,182.0 773.5,181.6 776.8,182.2 780.2,183.0 780.8,186.0 781.1,189.1 781.2,192.2 783.2,195.2 786.4,196.1 788.5,198.9 791.1,200.6 794.4,201.3 797.9,200.7 801.5,200.3 802.6,203.4 804.4,206.2 804.6,209.5 804.3,212.8 802.8,215.7 801.5,218.6 804.9,216.7 808.6,215.6 811.5,216.9 814.9,216.3 817.8,217.6 821.4,219.2 823.3,223.0 826.9,224.7 828.9,227.3 831.5,229.4 832.9,232.4 835.0,234.9 838.5,235.6 841.1,237.9 844.5,238.0 847.9,238.9 851.3,237.9 852.0,234.5 851.7,231.2 851.3,227.8 854.3,226.7 856.4,229.5 857.9,232.7 859.4,235.9 862.5,235.5 865.5,236.9 868.5,236.7 871.6,236.9 874.8,238.5 878.5,238.6 881.8,240.0 885.4,240.5 888.4,242.6 892.0,243.0 892.2,246.4 893.5,249.4 895.3,252.2 897.6,254.5 900.2,256.2 902.9,257.8 906.1,258.7 908.4,260.9 911.1,262.4 913.6,264.4 916.3,262.4 919.4,261.2 922.6,260.5 925.8,259.8 929.1,258.9 932.5,259.3 935.9,259.3 939.1,257.9 942.5,257.5 942.2,261.0 942.6,264.3 944.1,267.5 941.4,269.3 940.4,272.4 938.6,275.0 936.6,277.4 934.7,279.8 932.7,282.2 930.3,284.2 930.1,287.2 930.3,290.3 930.7,294.0 932.0,297.4 933.8,300.6 934.9,304.1 934.9,308.6 938.6,310.4 942.5,311.7 945.4,313.0 948.8,312.4 951.6,314.3 954.7,314.7 959.0,313.2 962.4,310.2 966.9,313.2 967.9,316.2 969.5,318.8 971.5,321.2 973.0,323.9 976.0,323.3 979.1,323.9 981.3,326.4 984.4,327.7 986.8,330.0 990.0,331.7 993.3,333.2 997.1,333.3 1000.5,334.6 1003.7,335.9 1006.2,338.4 1009.7,339.1 1011.9,342.0 1015.2,343.8 1017.3,346.8 1020.7,347.6 1023.4,349.8 1027.5,350.7 1031.0,352.9 1032.6,356.9 1035.6,360.0 1035.0,363.4 1036.3,366.8 1034.9,370.1 1034.6,373.5 1035.5,376.9 1037.0,380.0 1035.0,382.6 1033.8,385.8 1031.7,388.3 1030.1,391.2 1030.8,394.6 1031.1,397.9 1029.2,401.3 1029.8,404.6 1030.1,408.0 1028.7,410.8 1026.5,413.2 1026.0,416.4 1023.8,418.8 1022.5,421.6 1021.7,424.7 1022.3,428.2 1022.2,431.7 1022.1,435.2 1021.7,438.7 1022.9,441.7 1022.9,444.9 1024.3,447.8 1024.7,451.0 1025.9,453.9 1025.1,457.4 1026.9,460.2 1027.4,463.3 1027.8,466.5 1028.7,469.5 1028.9,472.8 1030.7,475.7 1030.7,479.0 1032.4,481.9 1033.3,485.0 1034.3,488.1 1036.2,490.9 1036.3,494.3 1037.1,497.4 1038.8,500.0 1040.2,502.6 1039.8,506.0 1042.1,508.4 1042.6,511.4 1043.2,514.4 1044.6,517.0 1046.1,519.7 1046.9,522.6 1046.4,525.6 1045.9,528.6 1044.9,531.6 1045.8,534.8 1044.4,537.7 1044.6,540.8 1044.1,543.8 1042.6,546.7 1042.7,549.8 1042.1,552.8 1041.3,555.8 1041.3,558.9 1040.7,562.0 1041.9,565.0 1041.8,568.0 1042.2,571.0 1042.4,574.1 1042.3,577.1 1043.0,580.1 1043.1,583.2 1043.4,586.2 1042.8,589.3 1043.5,592.3 1044.1,595.3 1043.6,599.0 1043.7,602.7 1045.3,606.3 1045.0,610.0 1042.0,609.9 1039.0,609.1 1035.9,609.3 1032.9,610.7 1029.9,610.8 1026.9,610.1 1023.8,610.9 1020.8,610.5 1017.8,610.9 1014.8,609.7 1011.7,609.4 1008.7,609.2 1005.7,610.7 1002.7,609.6 999.6,609.7 996.6,610.7 993.6,609.2 990.6,609.1 987.5,610.6 984.5,609.1 981.5,610.2 978.5,610.0 975.4,609.0 972.4,609.3 969.4,610.7 966.4,610.1 963.3,610.0 960.3,610.3 957.3,610.6 954.3,610.4 951.2,609.6 948.2,611.0 945.2,609.9 942.2,610.1 939.1,611.0 936.1,610.3 933.1,609.8 930.1,610.0 927.0,610.9 924.0,609.0 921.0,609.4 918.0,609.1 914.9,610.8 911.9,610.5 908.9,610.9 905.9,609.4 902.8,610.5 899.8,610.7 896.8,610.2 893.8,609.2 890.7,609.4 887.7,610.5 884.7,610.7 881.7,609.2 878.6,609.9 875.6,609.6 872.6,610.0 871.8,606.7 871.7,603.3 872.6,600.0 871.5,597.0 869.5,594.4 867.4,591.9 867.5,588.3 865.5,585.7 864.3,582.7 861.6,580.5 861.5,577.0 859.4,574.5 859.1,570.9 861.3,567.6 861.1,564.0 861.5,560.4 862.4,557.0 865.7,556.7 869.2,557.0 872.3,555.3 875.6,554.6 879.0,554.9 882.3,553.9 885.7,554.0 885.9,550.9 886.9,548.0 887.6,545.0 888.8,542.2 889.9,539.3 890.8,536.4 892.6,533.8 893.0,530.7 892.3,527.6 892.5,524.4 891.6,521.2 891.7,518.1 890.8,514.9 891.1,511.7 890.3,508.6 891.5,505.3 890.9,502.2 890.0,499.1 890.3,495.9 890.1,492.7 888.2,490.1 884.7,489.4 882.8,486.9 884.1,483.7 883.9,480.2 884.7,476.9 886.0,473.7 885.7,470.1 886.6,466.8 887.2,463.5 890.2,463.0 893.3,462.7 895.9,460.7 899.0,460.8 901.9,459.7 904.8,458.7 907.6,457.6 909.7,455.3 911.8,453.0 913.6,450.4 916.4,448.9 916.4,445.5 916.9,442.3 918.9,439.4 918.7,435.9 919.2,432.7 919.7,429.4 921.2,426.4 920.9,422.9 920.0,419.6 918.6,416.5 916.9,413.4 915.8,410.2 915.0,406.9 914.4,403.5 912.1,400.9 909.4,398.7 907.7,395.7 905.2,393.3 903.3,390.4 899.7,390.0 896.3,390.5 893.0,391.9 890.2,393.4 887.6,395.5 884.6,396.6 882.8,399.2 883.3,402.5 882.3,405.4 882.1,408.5 880.5,411.2 879.5,414.0 878.6,416.9 878.3,420.0 876.9,422.7 877.0,425.9 875.6,428.6 875.1,431.6 873.6,434.4 872.6,437.2 870.2,440.0 867.3,442.1 864.1,443.6 861.2,445.8 858.0,447.4 858.5,451.1 859.3,454.7 860.0,458.4 858.4,461.4 857.4,464.7 856.1,467.9 854.6,471.0 854.4,474.5 853.3,477.8 851.8,480.9 850.5,483.8 851.7,487.1 850.2,490.0 850.0,493.1 850.8,496.3 849.5,499.3 848.5,502.3 848.1,505.4 848.3,508.5 847.8,511.5 847.4,514.6 847.7,517.7 844.6,519.0 841.3,518.8 838.1,519.4 834.7,519.4 831.5,520.0 828.3,520.6 825.2,521.8 823.0,524.4 820.5,526.8 818.8,529.7 816.8,532.4 815.5,535.7 813.0,538.1 815.0,542.2 812.0,544.1 808.7,544.9 805.3,545.5 802.2,547.0 798.7,547.3 797.5,550.2 797.6,553.2 796.9,556.2 796.4,559.2 795.8,562.2 795.7,565.2 796.1,568.4 794.0,571.1 793.6,574.1 793.6,577.1 793.0,580.1 792.6,583.1 791.3,585.8 791.3,589.0 789.1,591.4 788.9,594.5 788.2,597.5 786.4,600.0 786.9,603.3 785.9,606.7 786.4,610.0 783.4,610.6 780.3,609.5 777.3,609.0 774.2,610.0 771.2,610.2 768.1,610.0 765.1,609.6 762.1,609.5 759.0,609.8 756.0,609.7 752.9,610.8 749.9,610.7 746.8,610.5 743.8,609.5 740.8,610.4 737.7,609.9 734.7,611.0 731.6,610.9 728.6,610.5 725.5,609.7 722.5,609.6 719.5,609.6 716.4,610.4 713.4,610.0 710.3,610.1 707.3,610.1 704.3,610.8 701.2,609.2 698.2,610.6 695.1,609.0 692.1,609.1 689.0,611.0 686.0,610.1 683.0,609.4 679.9,609.1 676.9,610.1 673.8,610.5 670.8,610.6 667.7,609.1 664.7,610.0 664.1,606.8 664.9,603.6 664.0,600.5 664.7,597.3 662.8,594.6 661.6,591.4 659.0,589.3 656.0,588.2 654.2,585.3 651.3,584.1 649.1,581.8 646.4,580.4 643.3,579.5 641.4,576.7 638.4,575.6 639.2,572.3 639.1,568.8 639.9,565.5 641.6,562.5 642.4,559.2 642.9,555.9 644.1,552.7 644.6,548.5 646.4,544.7 644.1,546.7 641.6,548.4 638.6,549.3 637.0,552.4 633.7,552.9 631.5,555.0 628.4,555.4 626.0,557.7 622.6,557.2 619.9,558.6 616.9,559.2 614.5,561.4 611.5,562.2 608.6,563.0 605.6,561.6 603.4,559.0 600.1,558.1 597.1,556.9 594.3,555.3 591.3,553.9 588.2,552.8 585.8,550.4 583.3,548.2 582.8,544.8 580.0,542.8 579.3,539.4 576.4,537.6 574.6,535.0 573.2,532.1 574.0,528.3 574.1,524.4 575.5,520.7 578.8,518.9 582.7,518.5 585.8,516.1 588.4,518.0 591.4,519.0 594.4,519.8 597.1,521.4 600.0,522.6 603.2,523.1 606.0,524.5 609.4,524.4 612.0,526.4 613.8,523.7 614.6,520.6 616.5,518.0 617.6,515.1 618.3,511.9 620.0,509.2 616.7,508.3 614.7,505.1 611.1,504.7 608.6,502.4 605.8,500.5 602.9,498.7 600.1,496.8 597.8,494.1 595.3,491.8 591.7,491.0 589.2,488.6 590.1,485.2 590.0,481.7 591.0,478.3 591.5,474.9 593.1,471.8 594.5,468.6 596.3,465.6 598.1,462.7 600.4,460.0 600.4,454.9 598.1,452.7 595.1,451.9 595.1,448.9 595.1,445.8 598.9,444.2 598.9,439.7 596.9,435.7 595.9,431.3 592.8,430.7 589.7,430.8 586.7,432.0 586.7,426.7 590.9,425.5 595.1,424.4 595.1,419.8 591.7,419.0 588.7,417.5 585.6,416.3 582.9,414.1 580.6,411.9 578.7,409.2 577.7,406.2 577.9,403.1 578.3,400.0 579.5,398.0 580.9,395.0 583.2,392.6 585.6,390.3 587.2,387.4 588.4,384.3 590.4,381.7 592.7,379.7 595.3,378.0 594.9,374.3 594.3,370.7 594.1,367.0 591.1,366.8 588.0,366.8 585.1,365.9 582.4,364.0 579.1,365.1 576.3,363.8 573.3,363.3 570.3,360.9 567.1,359.0 563.3,358.7 559.8,360.5 556.1,360.8 552.4,360.8 549.5,362.2 546.4,362.8 543.3,363.7 540.2,364.5 536.9,365.9 534.2,368.2 531.4,370.4 529.1,373.1 530.1,376.8 529.1,380.5 534.0,382.9 532.9,386.4 530.3,389.0 527.1,389.7 523.9,390.4 521.2,392.3 518.1,393.3 515.3,391.9 512.0,391.8 509.5,389.7 504.6,392.7 501.0,395.3 497.2,397.6 494.7,394.5 491.1,392.7 487.6,391.3 483.9,390.4 480.1,390.3 475.9,388.7 471.5,389.0 470.4,386.0 470.3,382.9 466.6,381.7 464.6,378.3 464.1,374.3 461.7,372.3 460.5,369.4 457.9,367.8 455.4,365.9 453.1,363.9 450.2,362.7 447.5,361.3 445.0,359.5 442.1,358.4 438.4,354.1 434.8,355.6 431.0,356.9 427.4,358.4 424.8,360.7 421.0,360.9 418.5,363.4 414.8,363.7 412.0,365.7 409.1,367.5 410.0,370.7 410.8,373.9 410.5,377.3 410.6,380.7 409.5,383.9 409.1,387.2 409.9,390.6 409.6,394.0 408.4,397.2 407.9,400.5 407.7,403.8 405.3,406.3 402.9,408.9 399.9,410.7 398.1,413.9 395.1,415.8 392.3,417.8 390.2,420.6 389.8,417.1 389.5,413.6 386.6,411.4 383.1,410.5 379.7,409.4 377.9,406.1 374.8,403.9 372.0,401.4 370.0,398.3 368.9,395.3 369.8,392.0 368.7,389.0 367.4,386.0 367.2,382.9 365.0,385.3 361.9,386.0 359.0,387.2 356.6,389.1 354.1,391.0 351.0,391.8 348.1,392.9 346.1,395.6 343.6,397.5 340.6,398.5 337.8,399.7 334.8,401.2 331.5,402.1 328.8,404.4 325.2,404.7 322.4,406.6 320.4,404.0 317.8,402.0 315.5,399.7 317.8,395.8 321.0,392.7 321.3,389.0 319.7,385.7 317.0,384.3 315.2,381.7 312.0,380.9 309.9,378.7 307.8,376.5 307.0,373.4 304.5,371.4 303.9,368.1 301.5,366.1 302.2,362.6 302.9,359.1 300.3,355.9 298.7,352.1 295.5,352.1 292.4,351.2 289.3,350.2 286.1,350.0 282.6,349.1 279.1,350.7 275.6,350.2 272.1,350.0 268.7,351.3 265.0,350.5 261.8,352.8 258.2,352.8 255.0,353.5 251.9,353.3 248.7,352.5 245.6,352.1 248.4,349.1 249.8,345.2 253.7,343.8 256.8,341.0 258.0,337.6 258.2,334.0 261.4,334.6 264.5,334.2 267.5,332.6 270.7,332.6 269.3,328.4 266.5,326.0 265.4,322.2 262.4,320.0 265.0,317.6 266.0,314.0 268.9,311.9 267.6,309.0 265.6,306.4 264.1,303.7 262.4,300.9 260.6,298.3 258.8,295.7 258.1,292.4 255.8,290.0 254.1,287.2 253.1,283.8 250.5,281.6 247.1,280.1 245.1,276.5 241.2,275.6 238.6,273.0 233.0,272.5 231.2,269.8 230.6,266.5 228.5,264.0 226.8,268.1 226.4,272.5 223.6,274.1 221.1,276.2 217.8,276.9 214.6,277.4 211.4,278.0 208.0,277.3 204.9,279.2 201.6,279.0 199.1,276.7 197.5,273.5 194.0,272.3 192.2,269.3 190.5,266.3 188.1,263.9 185.4,261.8 182.0,260.4 179.0,258.2 176.7,255.3 176.3,252.1 178.4,249.3 177.5,246.1 178.9,243.1 178.9,240.0 177.4,236.2 174.3,233.5 172.4,230.0 170.4,227.3 169.3,224.2 171.2,220.9 171.4,217.1 172.1,213.1 172.4,209.0 170.6,205.8 170.1,202.0 168.3,198.8 166.9,195.9 165.8,192.8 164.3,190.0 164.7,186.4 164.0,183.3 162.2,180.5" fill="#fbf8f1" stroke="none"/>
<polygon points="431.7,194.7 435.8,193.4 440.0,193.0 443.7,190.6 447.0,187.6 448.0,192.0 451.9,193.4 456.0,194.0 459.4,192.6 462.0,190.0 464.3,187.8 467.0,186.2 470.0,185.0 471.6,182.3 474.3,180.5 475.2,183.7 475.0,187.0 480.0,186.0 483.5,182.5 486.0,186.0 483.1,188.7 481.0,192.0 483.7,193.4 485.5,196.0 488.1,197.6 490.0,200.0 493.8,200.6 497.4,201.9 501.0,203.0 500.0,206.0 496.9,205.7 494.0,206.5 491.0,207.0 488.0,208.7 484.6,208.9 481.4,209.9 478.0,210.0 474.5,210.3 471.2,211.4 468.0,213.0 465.3,211.0 462.0,210.0 460.1,207.2 457.7,205.0 455.0,203.0 451.7,201.4 448.1,200.9 444.4,201.2 441.0,200.0 438.2,197.6 434.8,196.5" fill="#a9cff9" stroke="#a9cff9" stroke-width="1" stroke-linejoin="round"/>
<polygon points="421.6,312.7 424.6,310.9 428.2,310.9 431.4,309.8 434.6,308.4 438.6,309.3 442.5,307.9 446.5,308.4 449.7,309.6 452.2,312.0 455.3,313.5 458.4,314.8 458.9,311.6 460.6,308.7 460.9,305.5 462.6,302.6 462.2,299.2 463.4,296.1 464.8,293.2 465.4,290.0 464.1,286.9 463.7,283.8 464.6,280.6 464.1,277.5 463.0,274.4 463.6,271.2 463.6,268.0 462.4,264.9 463.2,261.7 462.7,258.6 466.4,260.2 469.2,263.0 469.7,266.0 470.5,269.0 470.4,272.0 469.1,275.1 470.4,278.1 469.5,281.2 470.8,284.1 470.7,287.2 470.3,290.2 471.3,293.2 473.8,295.1 477.1,295.8 479.3,298.2 482.1,299.7 481.2,302.7 481.5,306.0 481.1,309.1 478.9,311.9 479.0,315.1 479.0,318.3 477.8,321.3 479.2,324.3 480.9,327.1 481.2,330.6 483.0,333.4 484.3,336.4 486.6,339.3 487.0,343.2 489.9,345.8 490.8,349.4 491.2,353.0 491.7,356.6 490.8,360.2 487.6,362.0 485.5,365.2 482.1,366.7 477.8,367.8 473.5,368.9 474.2,365.0 476.3,361.7 477.8,358.1 474.8,357.3 471.8,357.2 468.7,356.9 465.7,356.4 462.7,355.9 460.8,353.5 459.3,350.8 456.6,348.8 455.5,345.9 453.3,343.6 451.9,340.8 449.2,338.4 446.3,336.6 442.3,336.3 439.4,334.5 436.7,332.1 433.4,330.8 429.9,330.2 426.1,330.5 423.0,328.3 419.5,327.8 418.0,325.0 415.1,323.6 413.0,321.3 414.9,318.9 417.4,317.1 420.1,315.5" fill="#a9cff9" stroke="#a9cff9" stroke-width="1" stroke-linejoin="round"/>
<polygon points="752.0,231.0 757.0,229.5 758.2,232.8 761.0,235.0 761.3,238.5 759.2,241.6 759.0,245.0 754.0,248.0 751.9,244.2 751.0,240.0 752.3,237.1 750.7,233.9" fill="#a9cff9" stroke="#a9cff9" stroke-width="1" stroke-linejoin="round"/>
<polygon points="643.1,234.0 647.0,236.0 650.1,234.0 650.8,237.7 651.1,241.5 651.5,245.2 648.3,246.3 645.0,247.0 640.3,246.6 643.0,243.7 645.9,241.0 644.3,237.6" fill="#a9cff9" stroke="#a9cff9" stroke-width="1" stroke-linejoin="round"/>
<polygon points="604.0,306.7 607.5,304.9 611.0,303.0 614.3,302.0 617.0,300.0 619.8,302.7 623.5,303.9 623.2,308.0 622.0,312.0 619.1,313.2 616.5,315.0 614.0,317.0 610.1,315.2 606.0,314.0 604.2,310.6" fill="#a9cff9" stroke="#a9cff9" stroke-width="1" stroke-linejoin="round"/>
<polygon points="827.5,389.8 830.3,388.5 833.4,388.8 836.2,387.5 839.1,386.6 842.1,386.5 845.1,385.8 848.0,385.2 851.1,385.2 854.1,385.1 857.2,384.7 860.3,384.7 863.3,385.6 866.4,385.2 869.6,386.0 872.3,387.8 875.3,389.1 878.3,390.4 881.3,391.7 884.6,392.0 884.2,395.3 883.3,398.5 881.4,401.5 880.8,404.8 880.0,408.0 879.2,411.2 877.1,413.7 875.4,416.5 874.2,419.5 874.0,422.9 872.6,425.8 870.9,428.6 869.3,431.6 865.7,432.5 864.5,435.8 861.5,437.4 859.5,440.0 856.4,439.6 853.2,439.3 850.1,439.1 847.0,438.3 843.8,438.4 840.6,438.7 837.4,438.8 834.3,437.8 832.9,434.6 832.4,431.1 829.6,428.5 829.2,424.9 827.5,421.8 828.5,418.8 828.3,415.5 829.2,412.5 830.9,409.7 831.1,406.5 832.0,403.5 830.7,400.1 829.7,396.7 827.9,393.5" fill="#a9cff9" stroke="#a9cff9" stroke-width="1" stroke-linejoin="round"/>
<polygon points="893.0,253.8 895.6,255.9 898.2,258.0 901.3,259.4 904.1,261.2 907.0,262.8 909.1,265.7 912.4,266.7 915.8,265.4 919.2,264.3 922.7,263.7 926.1,262.8 929.7,262.4 932.8,261.0 936.0,259.8 939.1,258.4 942.6,258.0 942.5,261.1 942.1,264.1 941.2,267.1 941.5,270.2 940.5,273.2 939.0,276.3 936.6,278.8 934.0,280.9 932.0,283.7 929.7,286.2 926.3,284.3 922.7,282.7 918.9,281.8 915.5,282.8 912.2,284.3 908.4,284.0 904.9,284.8 901.6,286.2 898.8,284.8 896.4,282.7 893.3,281.7 890.8,279.7 894.0,279.0 896.8,277.4 899.4,275.4 902.4,276.0 905.5,276.3 908.5,274.9 911.6,275.5 914.6,275.4 917.7,273.6 920.7,271.5 923.2,268.9 920.2,269.5 917.3,270.5 914.1,269.9 911.2,271.4 908.1,271.0 905.7,268.9 902.4,268.4 900.2,265.9 897.7,264.2 895.1,262.4 893.3,258.3" fill="#a9cff9" stroke="#a9cff9" stroke-width="1" stroke-linejoin="round"/>
<polygon points="940.0,320.0 944.4,318.7 948.0,316.0 952.1,315.4 956.0,314.0 954.5,317.9 954.0,322.0 950.9,323.0 948.9,325.7 946.0,327.0 942.6,325.7 939.0,325.0" fill="#a9cff9" stroke="#a9cff9" stroke-width="1" stroke-linejoin="round"/>
<polygon points="969.4,339.6 973.2,340.7 976.5,343.1 979.8,346.1 983.6,348.5 982.7,352.0 982.4,355.6 981.8,359.1 985.4,358.5 988.9,359.7 992.5,359.1 995.6,357.3 997.9,354.7 1000.5,352.4 1003.2,350.2 1006.9,350.6 1010.5,351.0 1013.9,352.7 1017.4,353.8 1015.6,359.1 1012.3,360.4 1009.6,362.8 1005.8,362.9 1003.0,365.3 999.6,366.3 1000.1,369.8 1000.5,373.4 999.6,376.9 996.0,377.8 993.2,380.0 989.9,381.6 987.2,384.0 986.2,380.4 983.9,377.2 983.6,373.4 979.8,371.0 976.5,368.0 978.2,364.4 980.0,360.9 978.4,358.0 979.1,354.5 977.1,351.7 976.5,348.5 973.4,346.3 971.2,343.1" fill="#a9cff9" stroke="#a9cff9" stroke-width="1" stroke-linejoin="round"/>
<polygon points="923.1,384.0 926.7,384.6 930.2,382.7 933.8,383.2 937.4,385.2 939.1,389.3 942.7,391.2 945.6,393.8 948.0,396.7 949.8,400.1 953.2,403.0 956.9,405.4 953.4,406.6 949.8,407.2 946.5,405.3 942.5,405.3 939.1,403.6 937.8,406.6 938.6,409.9 937.6,412.9 937.4,416.1 935.2,413.6 932.3,412.2 929.8,410.1 926.7,409.0 926.2,405.8 924.0,403.0 924.7,399.4 923.1,396.5 923.3,393.4 922.7,390.2 922.5,387.1" fill="#a9cff9" stroke="#a9cff9" stroke-width="1" stroke-linejoin="round"/>
<polygon points="940.9,360.0 942.4,362.9 944.5,365.2 946.7,367.5 950.1,368.7 951.6,371.6 950.8,374.5 950.5,377.6 949.8,380.5 949.0,376.9 948.0,373.4 945.6,371.1 943.9,368.4 942.6,365.4 940.9,362.7" fill="#a9cff9" stroke="#a9cff9" stroke-width="1" stroke-linejoin="round"/>
<polygon points="964.0,393.0 969.4,391.2 971.3,394.1 973.3,396.9 976.6,398.7 978.3,401.8 977.3,405.4 978.9,409.0 978.0,412.5 978.3,416.1 972.9,416.1 970.0,413.9 968.8,410.4 965.7,408.5 964.0,405.4 964.4,402.3 964.4,399.2 964.5,396.1" fill="#a9cff9" stroke="#a9cff9" stroke-width="1" stroke-linejoin="round"/>
<polygon points="981.8,394.7 985.5,396.3 989.0,398.3 988.1,401.9 988.3,405.4 989.6,408.9 989.0,412.5 985.8,414.7 983.6,417.9 983.4,414.7 981.8,411.8 983.1,408.4 981.8,405.4 981.3,401.8 981.4,398.3" fill="#a9cff9" stroke="#a9cff9" stroke-width="1" stroke-linejoin="round"/>
<polygon points="873.0,392.0 874.5,389.2 874.4,385.8 876.0,383.0 877.5,379.2 880.0,376.0 882.6,373.6 885.0,371.0 888.6,368.2 893.0,367.0 891.8,370.6 891.1,374.2 891.0,378.0 892.4,381.1 891.6,384.6 892.5,387.8 893.0,391.0 889.7,390.9 886.3,390.4 883.0,390.5 879.7,391.8 876.3,391.1" fill="#a9cff9" stroke="#a9cff9" stroke-width="1" stroke-linejoin="round"/>
<polyline points="812.5,298.1 815.6,299.9 818.7,301.7 822.0,303.0 825.1,305.3 828.8,306.3 827.2,309.6 824.7,312.4 822.9,316.6 820.0,320.0 820.4,323.7 822.1,327.0 822.7,330.6 825.8,331.0 828.8,332.3 832.0,331.9 835.0,333.0 838.1,333.0 841.0,331.8 843.9,330.5 847.0,330.6 847.8,333.6 849.6,336.1 851.1,338.8 853.7,340.8 854.8,344.0 856.9,346.4 859.0,348.8 861.3,351.0 858.4,352.8 855.4,354.4 853.2,357.0 853.6,360.1 851.7,363.0 851.9,366.1 852.2,369.2 851.3,372.2 851.1,375.3 853.0,378.8 854.1,382.5 856.0,386.0" fill="none" stroke="#a9cff9" stroke-width="4.5" stroke-linejoin="round" stroke-linecap="round"/>
<polyline points="851.1,368.0 847.7,369.4 844.1,370.2 840.4,370.3 836.9,371.3 833.8,370.6 830.8,369.6 828.1,368.0 825.1,366.9 822.1,366.1 819.2,364.7 816.6,362.9 813.2,362.8 810.5,361.1" fill="none" stroke="#a9cff9" stroke-width="4.5" stroke-linejoin="round" stroke-linecap="round"/>
<polyline points="260.3,349.3 263.7,348.8 267.0,347.9 270.5,348.1 273.7,346.7 277.1,346.5 280.5,345.9 283.7,346.0 286.9,346.4 290.0,347.6 293.4,346.5 296.5,347.3 299.7,347.3 302.9,348.0 304.3,350.9 304.5,354.3 306.7,357.0 307.4,360.1 308.9,363.0 309.9,366.1 311.7,368.8 314.2,370.9 316.6,373.1 318.3,375.9 321.1,377.2 323.9,378.6 326.4,380.5 329.4,381.6 332.2,382.9 335.0,385.7 337.6,383.6 340.7,382.7 343.2,380.5 346.2,379.2 348.8,377.1 351.8,375.9 353.1,373.0 355.0,370.5 356.0,367.5 358.5,365.8 361.2,364.4 363.7,362.7 366.0,360.8 368.5,359.1 370.8,357.1 373.5,355.7 376.1,354.2 378.3,352.1 381.6,354.4 383.4,358.2 386.7,360.5 388.3,357.8 389.8,355.0 391.6,352.4 393.7,350.0 395.1,347.2 397.4,344.9 399.3,342.4 398.2,339.2 397.7,335.8 396.5,332.6 399.3,329.8 402.6,327.5 404.9,324.2 407.1,321.8 408.7,318.9 411.4,316.9 413.0,314.0 417.3,313.7 421.6,312.7" fill="none" stroke="#9cc8f7" stroke-width="1.6" stroke-linejoin="round"/>
<polyline points="378.3,352.1 375.6,350.3 372.6,348.9 369.6,347.6 367.2,345.2 364.9,343.2 362.0,342.1 359.6,340.3 357.4,338.2 355.5,335.7 354.0,332.9 352.6,330.0 350.1,327.8 349.0,324.8 347.2,322.2 344.8,320.0 343.2,316.1 342.4,311.9 339.3,311.7 336.5,310.6 333.9,308.7 330.9,308.1 328.2,306.8 325.1,306.5" fill="none" stroke="#9cc8f7" stroke-width="1.6" stroke-linejoin="round"/>
<polyline points="356.0,367.5 352.9,366.8 350.1,365.3 347.5,363.5 344.8,361.9 345.0,366.0" fill="none" stroke="#9cc8f7" stroke-width="1.6" stroke-linejoin="round"/>
<polyline points="352.7,235.8 355.9,234.7 359.2,234.5 362.4,234.2 365.8,234.8 369.0,233.7 372.0,233.3 375.1,233.2 377.9,231.7 381.0,232.0 384.0,231.5 387.3,231.4 390.4,230.3 393.7,230.3 396.9,229.5 400.0,228.3 403.6,226.5 407.3,225.0 405.4,222.1 405.0,218.6 408.5,219.0 412.0,218.0 415.4,217.8 418.9,219.0 422.4,218.6 424.8,220.7 427.5,222.3 430.1,224.1 433.4,224.6 436.2,226.1 438.9,227.8 440.9,230.5 444.0,231.5 447.5,231.3 451.0,231.8 454.5,232.1 457.9,232.5 461.3,233.7 464.0,235.8 465.8,238.7 468.1,241.1 470.1,243.8 472.0,246.6 469.4,248.3 468.1,251.3 465.2,252.8 463.4,255.3 464.5,258.4 466.2,261.1 467.8,264.0" fill="none" stroke="#9cc8f7" stroke-width="1.6" stroke-linejoin="round"/>
<polyline points="490.8,358.0 493.6,356.0 496.6,357.9 499.6,359.8 502.5,361.9 505.8,363.3 508.3,361.4 511.3,360.2 514.1,358.9 516.8,357.3 518.9,354.7 521.8,353.5 524.9,353.3 527.9,352.7 531.0,352.1 534.0,351.6 536.4,354.5 539.7,356.2 542.6,358.4 545.7,357.7 548.9,357.9 551.9,356.8 554.9,356.0 555.8,352.2 557.0,348.6 558.5,345.0 561.4,344.0 564.3,343.0 567.7,342.3 571.1,343.2 574.5,343.4 577.8,342.9 581.2,343.6 584.6,343.7 588.0,343.0 590.1,345.9 592.1,348.9 594.5,351.6 597.2,353.9 598.9,357.0 601.6,359.0 602.6,362.4 605.6,364.0 607.5,366.7 610.5,368.8 612.5,372.0 615.4,374.3 618.4,376.4 621.4,374.6 624.8,373.6 628.0,372.3 631.2,371.1 634.3,369.4 637.8,368.9 641.0,368.4 644.2,367.5 647.5,367.1 650.7,366.3 653.9,365.6 657.1,364.9 660.6,365.7 663.7,364.6 666.7,364.0 669.5,362.7 672.2,361.1 675.1,360.1 677.9,359.1 680.9,358.4 683.7,357.0 686.6,356.3 689.5,355.2 692.4,354.2 695.5,353.9 698.3,352.7 701.1,354.0 703.9,355.4 706.8,356.7 709.4,358.3 712.0,360.0 715.2,360.7 717.8,362.4 721.0,362.0 724.0,363.0 727.1,363.2 730.1,364.1 733.3,363.4 736.3,364.9 739.4,364.6 742.7,364.0 745.9,365.0 749.1,365.0 752.4,365.0 755.6,366.1 758.8,366.0 762.1,365.3 765.3,366.0 768.2,367.7 771.1,369.5 774.5,370.3 777.4,372.1 780.0,374.3 782.8,375.6 785.6,376.8 788.6,377.5 791.5,378.6 794.3,379.8 797.3,380.5 800.0,382.0 802.2,384.2 804.6,385.9 807.5,387.0 810.4,388.0 812.6,390.2 815.0,392.0 818.0,393.2 821.3,393.2 824.5,393.6 827.5,395.0" fill="none" stroke="#9cc8f7" stroke-width="1.6" stroke-linejoin="round"/>
<polyline points="737.2,330.0 740.5,329.8 743.7,329.6 747.0,329.7 750.2,328.9 751.5,331.8 753.3,334.3 755.8,336.3 756.8,339.4 759.3,341.4 761.0,344.0 764.3,345.2 767.6,346.3 770.5,348.4 773.9,349.3 777.0,350.9 780.0,352.7 782.4,354.9 784.8,357.1 787.3,359.1 790.5,360.3 793.1,362.3 795.4,364.6 797.7,366.9" fill="none" stroke="#9cc8f7" stroke-width="1.6" stroke-linejoin="round"/>
<polyline points="573.2,531.0 575.2,533.4 577.1,536.0 579.2,538.4 581.2,540.9 584.0,542.6 585.2,545.7 587.8,547.7 590.0,550.0 592.5,552.3 595.2,554.3 597.7,556.5 601.1,557.6 603.7,559.7 606.3,561.8 609.5,561.3 612.6,560.3 615.7,559.8 618.7,558.4 622.1,558.5 625.0,557.0 627.4,554.5 630.8,553.6 633.3,551.4 635.8,549.1 639.2,548.1 641.5,545.4 644.5,543.9 647.5,542.4 650.4,541.5 653.3,540.6 656.3,540.0 659.2,539.2 662.4,539.8 665.1,538.0 668.1,537.5 671.0,536.7 674.2,537.4 677.1,536.2 680.0,535.5 683.2,534.2 686.2,532.7 688.7,530.3 691.5,528.5 694.5,526.9 697.6,526.2 700.8,525.4 704.1,525.3 707.3,525.4 710.4,524.1 713.6,523.9 716.9,523.5 720.0,522.9 723.1,521.8 726.3,522.4 729.5,522.4 732.8,522.0 735.9,522.7 739.0,523.8 742.3,523.4 745.5,523.8 747.3,526.3 749.9,528.2 751.5,530.9 754.0,532.8 755.4,535.7 757.4,538.1 759.8,540.1 762.9,539.6 765.9,540.9 769.1,540.2 772.0,541.9 775.2,540.9 778.3,541.1 781.3,542.6 784.4,542.2 787.6,542.2 790.8,541.1 794.0,541.7 797.3,542.2 800.4,541.0 803.7,541.7 806.9,541.2 810.9,540.3 815.0,540.0" fill="none" stroke="#9cc8f7" stroke-width="1.6" stroke-linejoin="round"/>
<polyline points="698.5,471.7 701.6,471.5 704.7,472.6 707.8,472.6 710.9,472.6 714.1,472.4 717.2,472.6 720.3,471.2 723.4,472.3 726.5,471.7 729.6,472.5 732.8,472.1 735.9,472.4 739.0,472.4 742.1,472.5 745.2,472.9 748.3,473.2 751.4,472.3 754.5,473.0 757.7,473.2 760.8,472.5 763.9,472.7 767.1,475.0 769.4,478.2 772.1,480.9 774.3,483.6 777.0,485.8 779.8,487.9 781.7,490.9 784.4,493.1 787.4,493.9 790.0,495.7 793.3,495.7 796.0,497.4 799.0,498.1 801.6,500.0 804.8,500.3 807.5,498.7 810.8,498.8 813.5,497.1 816.4,496.0 819.2,494.7 822.3,494.1 825.2,493.1 826.6,490.2 827.3,487.1 827.9,484.1 828.1,480.9 828.2,477.7 829.3,474.7 832.5,474.4 835.7,474.4 838.9,473.5 842.2,474.3 845.3,472.6 848.5,472.6 851.8,472.7" fill="none" stroke="#9cc8f7" stroke-width="1.6" stroke-linejoin="round"/>
<polyline points="743.5,589.2 746.1,587.2 747.8,584.3 750.8,582.7 753.4,580.7 755.8,578.5 757.8,575.9 761.0,576.3 764.1,576.8 767.4,576.7 770.5,577.3 773.8,577.0 776.8,578.3 780.0,578.5 783.3,578.3 786.4,579.0" fill="none" stroke="#9cc8f7" stroke-width="1.6" stroke-linejoin="round"/>
<polyline points="992.4,466.4 991.3,469.3 990.8,472.3 989.5,475.1 989.7,478.3 987.9,481.0 987.5,484.0 986.5,486.9 987.4,489.9 989.1,492.6 989.9,495.6 991.1,498.5 992.1,501.5 992.9,504.5 990.7,506.6 989.1,509.2 986.5,511.1 985.1,513.8 983.6,516.6 981.2,518.5 979.4,521.0 979.9,524.0 981.0,526.9 980.9,530.0 978.2,532.2 976.2,535.1 973.2,536.9 970.4,539.0 967.7,541.1 964.9,543.0 961.9,544.7 959.6,547.3 957.0,549.5 960.0,554.0 957.0,557.0 954.2,555.3 952.5,552.5 950.0,550.5 948.0,548.0 945.7,545.9 943.4,544.0 940.1,543.3 938.2,540.6 935.3,539.5 933.0,537.5 929.9,537.5 927.0,536.6 924.0,536.0 922.1,538.9 920.3,541.9 918.3,544.8 916.1,547.5 913.8,550.2 912.0,553.2 909.0,553.7 906.0,553.4 903.0,553.6 900.0,553.2" fill="none" stroke="#9cc8f7" stroke-width="1.6" stroke-linejoin="round"/>
<polyline points="893.0,470.0 893.9,472.9 894.0,476.0 894.7,478.9 894.8,482.0 894.9,485.0 895.2,488.0 896.2,490.9 896.4,494.0 897.1,496.9 897.0,500.0 896.5,503.0 897.3,506.0 896.4,509.0 897.7,512.0 897.0,515.0 898.0,518.1 897.6,521.2 897.9,524.3 897.6,527.5 897.7,530.6 898.5,533.7 899.1,536.8 898.7,540.0 899.3,543.0 899.9,546.1 900.0,549.3 900.0,552.4 901.1,555.5 900.3,558.8 901.6,561.8 901.7,565.0 901.3,568.2 901.6,571.4 901.9,574.5 902.2,577.7 902.2,580.9 903.0,584.0 903.3,587.2 904.3,590.2 906.0,593.0 909.0,592.8 912.0,592.8 915.0,593.0" fill="none" stroke="#9cc8f7" stroke-width="1.6" stroke-linejoin="round"/>
<polyline points="865.0,566.0 866.1,569.5 866.4,573.2 868.7,576.3 869.0,580.0 870.5,582.9 870.7,586.3 872.4,589.1 874.4,591.8 875.0,595.0" fill="none" stroke="#9cc8f7" stroke-width="1.6" stroke-linejoin="round"/>
<polyline points="1018.9,424.7 1016.4,426.7 1014.0,428.8 1011.5,430.7 1008.2,431.6 1006.0,433.9 1003.5,435.9 1002.0,438.6 1001.0,441.5 1000.0,444.4 998.2,447.0 997.2,449.9 995.7,452.5 994.6,455.4 993.1,458.1 992.4,461.1 994.5,463.8 996.8,466.4 998.8,469.1 1000.1,472.5 1002.8,474.7 1004.1,478.0 1006.3,480.6 1005.9,483.6 1006.6,486.7 1005.2,489.6 1006.2,492.7 1004.6,495.6 1004.5,498.7 1005.2,501.7 1004.2,504.7 1004.0,507.7 1004.7,510.8 1003.7,513.7 1004.3,516.8 1003.5,519.8 1001.7,522.3 1000.9,525.3 999.3,527.9 999.5,531.2 998.0,533.9 996.4,536.5 995.2,539.3 994.7,542.3 992.5,544.7 991.4,547.5 991.1,550.6 989.6,553.3 991.1,556.3 991.3,559.8 992.7,562.9 993.4,566.2 994.6,569.3 995.8,572.4 996.6,575.7 997.4,578.7 997.2,581.8 996.7,584.8 996.2,587.9 996.7,590.9 996.2,593.9 996.5,597.0 996.6,600.0" fill="none" stroke="#9cc8f7" stroke-width="1.6" stroke-linejoin="round"/>
<polyline points="989.6,475.0 988.8,478.0 989.2,481.3 988.3,484.3 987.8,487.4 986.4,490.3 986.0,493.4 985.1,496.4 985.8,499.8 984.7,502.7 984.0,505.8 984.3,509.2 983.5,512.4 982.6,515.6 982.9,519.0 982.1,522.2 981.2,525.4 978.8,528.1 976.7,531.0 974.8,534.1 972.1,536.5 970.0,539.4" fill="none" stroke="#9cc8f7" stroke-width="1.6" stroke-linejoin="round"/>
<polyline points="1024.5,352.0 1024.7,355.7 1023.1,359.1 1022.8,362.7 1021.5,365.7 1019.2,368.1 1017.2,370.6 1015.6,373.4 1016.5,376.7 1018.4,379.6 1019.7,382.7 1021.0,385.8 1025.0,387.9 1028.1,391.2" fill="none" stroke="#9cc8f7" stroke-width="1.6" stroke-linejoin="round"/>
<polyline points="1022.8,371.0 1025.5,373.9 1028.0,377.0 1032.0,374.0" fill="none" stroke="#9cc8f7" stroke-width="1.6" stroke-linejoin="round"/>
<polyline points="1021.0,426.0 1021.2,429.5 1020.8,433.0 1021.3,436.5 1020.5,440.0 1021.4,442.9 1022.5,445.8 1023.2,448.7 1023.4,451.7 1024.3,454.6 1024.7,457.6 1024.7,460.7 1026.4,463.4 1026.2,466.6 1027.0,469.5 1028.5,472.4 1028.4,475.8 1029.5,478.9 1031.2,481.8 1031.2,485.2 1032.3,488.2 1034.3,491.0 1034.7,494.3 1035.5,497.4 1036.4,500.7 1037.2,503.9 1039.6,506.7 1040.6,509.9 1041.0,513.3 1041.9,516.6 1044.4,519.2 1045.0,522.6 1044.8,525.7 1042.9,528.3 1042.8,531.4 1041.8,534.3 1040.3,536.9 1040.0,540.0" fill="none" stroke="#9cc8f7" stroke-width="1.6" stroke-linejoin="round"/>
<polyline points="893.0,396.0 896.1,396.0 899.0,394.7 902.0,394.4 905.1,394.3 907.9,392.7 911.0,392.6 914.0,392.0 914.5,395.1 914.6,398.4 916.7,401.2 917.3,404.3 917.6,407.5 917.5,410.8 918.1,413.9 919.9,416.8 920.0,420.0 918.8,423.0 918.8,426.2 917.6,429.2 917.1,432.3 917.9,435.7 915.9,438.5 916.1,441.8 916.1,445.0 915.0,448.0 912.5,450.0 910.4,452.5 907.3,453.7 905.0,456.0" fill="none" stroke="#9cc8f7" stroke-width="1.6" stroke-linejoin="round"/>
<polyline points="862.0,600.0 861.1,596.7 860.6,593.4 859.9,590.0 859.1,586.7 858.7,583.3 858.0,580.0 858.5,576.6 858.6,573.2 859.9,570.0 859.9,566.5 860.7,563.2 862.0,560.0" fill="none" stroke="#9cc8f7" stroke-width="1.6" stroke-linejoin="round"/>
<polyline points="250.5,281.6 250.8,277.8 250.5,274.0 251.6,270.3 251.6,266.5 255.4,269.2 258.4,272.7 262.4,275.1 266.4,275.6 270.1,277.2 274.2,277.3 277.9,279.3 281.9,279.5 285.6,278.2 288.6,275.5 292.4,274.5 295.6,272.2 299.2,270.8 302.4,272.4 305.4,274.5 309.1,275.2 312.1,277.3 315.7,276.9 319.3,276.7 322.9,277.3 326.5,278.9 329.4,281.6 332.9,283.4 335.9,285.9 338.4,283.3 341.6,281.8 344.1,279.2 346.9,277.1 349.7,274.9 352.9,273.3 355.4,270.8 359.4,272.6 362.9,275.0 366.8,276.9 370.9,277.6 375.0,277.0 375.8,273.5 376.2,269.9 376.7,266.4 378.1,263.0 378.2,259.4 379.4,256.0 381.6,252.9 384.0,250.0" fill="none" stroke="#333" stroke-width="1" stroke-linejoin="round"/>
<polyline points="352.3,182.9 352.3,187.0 351.3,190.9 350.6,194.8 347.0,196.4 343.0,196.6 339.3,197.9 335.5,199.0 336.4,202.8 336.7,206.7 336.1,210.6 337.2,214.4 336.7,218.3 337.1,222.2 337.6,226.0 341.1,225.1 344.7,224.7 348.1,223.4 351.6,222.5 355.0,221.3 358.5,220.2 361.9,219.2 365.5,218.6 369.0,217.7 372.6,217.3 375.9,215.7 379.5,215.0 383.0,214.2 382.7,217.9 383.5,221.4 383.8,225.0 384.2,228.6 384.2,232.3 385.5,235.8 385.1,239.4 386.4,242.9 386.2,246.6 384.0,250.0 386.9,253.1 389.2,256.8 392.0,260.0 394.9,262.7 397.3,265.7 400.0,268.5 404.3,267.8 408.6,267.5 413.0,267.5 414.9,270.8 416.5,274.2 418.2,277.5 420.2,280.7 422.0,284.0 422.8,288.0 422.7,292.1 424.0,296.0 427.1,297.7 430.5,298.7 426.8,300.6 423.2,302.5 419.9,305.0 416.0,306.5 412.2,309.0 408.3,311.3 404.0,313.0 402.9,316.7 403.0,320.5 407.1,322.0 411.5,322.0 415.5,323.6 415.6,327.1 416.5,330.5 416.5,334.1 417.2,337.5 417.5,341.0 419.3,344.8 421.3,348.5 422.8,352.5 424.0,356.5 428.1,358.1" fill="none" stroke="#333" stroke-width="1" stroke-linejoin="round"/>
<polyline points="522.6,195.0 523.0,199.1 523.4,203.2 524.0,207.0 523.7,210.9 524.2,214.8 520.9,217.2 517.1,218.1 513.2,218.4 509.4,218.9 506.8,221.4 505.2,224.7 504.5,229.0 502.7,232.9 498.6,234.6 497.0,241.2 494.3,244.7 491.2,247.8 491.9,251.7 493.7,255.3 494.6,259.1 494.7,263.1 496.1,266.8 498.2,263.8 498.8,260.1 500.1,256.7 501.9,253.6 505.2,251.1 506.7,255.5 509.4,259.4 513.5,260.2 514.6,256.5 516.4,253.1 517.6,249.4 516.9,245.7 516.0,242.0 518.4,238.5 520.9,235.2 522.6,231.3 526.2,231.3 529.6,230.3 533.2,229.9 536.6,228.8 535.0,225.3 532.9,222.1 530.8,218.9 526.7,221.4 523.7,219.4 520.9,217.2" fill="none" stroke="#333" stroke-width="1" stroke-linejoin="round"/>
<polyline points="513.5,260.2 515.3,263.8 516.4,267.6 518.3,271.1 519.3,275.0 516.7,277.8 515.2,281.3 512.7,284.1 512.6,288.2 512.7,292.4 508.8,293.1 505.3,295.0 501.3,295.5 497.8,297.3 494.3,295.0 490.6,293.3 487.0,291.2 483.3,289.3 479.6,287.4 479.1,283.6 479.8,279.7 478.8,275.9 476.4,273.1 474.8,269.7 472.4,266.9 469.7,264.3 465.5,261.1 462.3,256.9" fill="none" stroke="#333" stroke-width="1" stroke-linejoin="round"/>
<polyline points="462.3,256.9 463.7,261.7 466.4,266.0 466.8,269.8 465.6,273.5 465.7,277.3 464.9,281.0 465.4,284.9 464.4,288.6 464.8,292.4 466.6,296.2 466.8,300.5 468.9,304.2 470.5,308.1 471.4,312.2" fill="none" stroke="#333" stroke-width="1" stroke-linejoin="round"/>
<polyline points="519.3,275.0 522.8,276.7 526.2,278.5 530.0,279.5 533.5,281.3 536.9,283.1 540.7,284.1 542.7,287.4 544.4,290.9 546.4,294.2 548.2,297.6 550.6,300.6 551.4,304.1 551.4,307.7 550.4,311.3 551.3,314.8 554.7,317.3 558.7,318.8 562.1,321.3 565.8,320.9 569.2,319.4 572.9,319.0 576.5,318.4 580.0,317.3 583.7,317.0 585.3,320.6 585.8,324.6 586.7,328.4 588.0,332.1 591.7,333.7 595.1,335.9 598.8,337.5 596.7,341.2 596.5,345.6 594.5,349.4 590.9,348.2 587.4,346.9 584.2,344.7 580.6,343.5 577.2,341.9 573.3,342.2 569.5,342.7 565.5,342.1 561.7,342.3 557.8,342.9 557.0,346.4 555.6,349.7 555.5,353.4 554.5,356.8 553.4,360.2" fill="none" stroke="#333" stroke-width="1" stroke-linejoin="round"/>
<polyline points="560.0,321.3 564.2,322.4 568.6,322.4 572.0,321.0 575.6,320.8 579.0,319.8 582.7,319.6 586.0,318.1" fill="none" stroke="#333" stroke-width="1" stroke-linejoin="round"/>
<polyline points="633.3,288.5 627.7,284.3 626.2,287.7 623.3,290.1 622.3,293.8 619.7,296.4 618.0,299.7 621.0,306.0" fill="none" stroke="#333" stroke-width="1" stroke-linejoin="round"/>
<polyline points="609.6,295.5 609.7,299.8 611.0,303.9 607.5,305.2 604.0,306.7 608.2,310.9 612.1,309.4 616.0,308.0" fill="none" stroke="#333" stroke-width="1" stroke-linejoin="round"/>
<polyline points="652.4,209.0 649.8,212.5 646.1,215.1 643.6,218.7 640.0,221.3 635.9,223.2 631.5,224.5 627.6,227.0 625.7,230.0 622.8,232.2 621.0,235.3 618.5,237.9 617.3,241.4 614.4,243.6 612.5,246.6 611.8,250.3 610.9,254.0 610.5,257.8 609.0,261.3 608.7,265.1 608.2,268.9 612.4,274.5 617.0,275.0 621.7,275.2 626.3,275.2 628.0,278.6 629.4,282.1 631.4,285.3 633.3,288.5 636.8,288.6 640.3,288.5 645.3,289.4 650.1,291.3 653.7,290.8 657.2,289.6 660.9,289.6 664.5,288.8 668.2,288.7 671.7,287.8 675.3,287.1 677.8,289.8 679.9,292.7 682.3,295.5 686.3,293.0 690.6,291.3 693.8,294.0 697.3,295.9 701.2,297.5 704.6,299.7 707.1,302.8 708.9,306.2 711.0,309.5 713.7,305.5 716.0,301.3 717.2,298.0 719.0,294.9 719.1,291.2 720.9,288.1 724.8,288.7 728.6,289.7 732.5,290.5 731.0,286.5 730.8,282.3 730.0,278.2 731.3,273.3 732.5,268.3 736.2,267.8 740.0,268.6 743.7,267.7 748.8,267.3 754.0,267.4 756.6,266.6 757.9,262.9 759.7,259.5 761.0,255.8 765.2,254.1 769.7,252.9 774.0,251.5 774.2,246.9 774.8,242.4 776.1,238.0 778.0,234.7 779.2,231.1 781.2,227.8 784.4,224.4 788.3,221.7 792.0,222.9 795.4,224.7 792.4,218.6 797.0,218.5 801.5,218.6" fill="none" stroke="#333" stroke-width="1" stroke-linejoin="round"/>
<polyline points="711.0,309.5 707.4,311.0 704.0,313.2 700.2,314.3 696.4,315.5 693.4,318.3 689.5,319.4 689.6,323.4 689.7,327.4 689.8,331.3 689.0,335.3 689.5,339.3 691.0,342.6 693.3,345.3 695.8,347.9 697.8,350.8 704.4,351.6 707.7,355.8 714.3,354.9 716.4,359.3 719.3,363.2 723.1,362.6 727.0,363.2 730.8,363.2 734.7,362.6 738.5,363.3 742.4,363.2 745.8,364.7 749.1,366.4 752.3,368.2 755.9,366.0 760.1,365.1 763.8,363.2 766.4,365.9 768.7,368.9 770.4,372.3 773.8,367.3 776.7,371.0 780.4,373.9 783.9,372.3 787.7,371.4 791.4,370.2 795.0,369.0 798.5,367.3 799.2,371.2 801.5,374.5 802.3,378.3 803.5,381.7 805.1,385.0 805.5,388.7 806.9,392.0 810.6,392.1 814.3,392.6 817.9,393.0 821.5,394.1 825.2,394.3 824.8,390.1 824.9,385.9 824.0,381.8 827.7,382.8 831.4,383.6 835.1,384.6 838.9,385.2 842.5,384.5 846.2,384.1 849.8,383.5 853.5,383.0 857.2,382.9 861.0,384.3 865.0,384.7 869.0,385.3 872.8,386.3 876.9,386.5 880.6,388.3 884.6,388.6" fill="none" stroke="#333" stroke-width="1" stroke-linejoin="round"/>
<polyline points="719.3,363.2 721.3,366.8 722.1,371.0 723.8,374.9 726.0,378.4 726.8,382.3 725.8,386.3 726.1,390.2 726.2,394.1 726.6,398.0 727.3,402.2 726.1,406.3 726.6,410.5 726.1,414.5 724.8,418.4 724.5,422.4 724.2,426.4 723.7,430.3 723.8,434.3 719.9,436.4 716.5,439.2 712.7,441.3 712.0,445.5 712.5,449.0 713.4,452.4 716.2,458.0 717.0,462.0 718.5,465.7 720.4,469.2 718.3,473.4 720.4,480.0 720.1,483.5 721.0,487.0 722.1,490.8 721.8,494.7 722.1,498.6 723.3,502.3 724.2,506.1 723.7,510.1 724.5,513.9 725.1,517.7 721.2,517.9 717.7,519.7 714.0,520.8 710.1,521.0 706.2,521.5 702.6,522.8 700.6,526.9" fill="none" stroke="#333" stroke-width="1" stroke-linejoin="round"/>
<polyline points="640.0,406.3 642.1,403.4 644.8,400.8 647.0,398.0 650.7,400.5 654.0,403.5 655.8,399.5 656.8,395.2 660.2,396.7 663.6,398.0 666.6,400.3 670.0,401.7 673.5,402.8 677.9,400.8 681.9,398.0 684.9,395.4 687.2,392.1 690.2,389.5 692.8,386.5 695.9,384.0 699.7,385.4 703.9,385.3 707.6,387.3 711.7,387.5 715.5,388.9 717.6,392.2 719.0,395.9 721.0,399.3 726.6,398.0" fill="none" stroke="#333" stroke-width="1" stroke-linejoin="round"/>
<polyline points="726.6,410.5 721.4,410.5 716.2,410.5 713.5,407.0 710.6,403.5 706.4,405.0 702.8,407.5 698.7,409.1 694.5,413.3 695.9,416.9 696.5,420.7 697.9,424.2 699.2,427.8 700.1,431.5 693.8,433.6 696.4,436.7 698.7,439.9 698.2,443.9 697.8,447.8 696.6,451.7 692.1,452.2 687.6,452.6 683.3,453.8 681.9,458.0 683.8,461.6 686.1,465.0 682.1,465.1 678.1,465.8 674.0,466.0 670.1,466.7 666.0,466.5 664.4,470.3 663.8,474.3 662.5,478.2 661.0,482.0 659.3,485.4 659.1,489.3 657.2,492.7 656.6,496.5 655.4,500.0 654.5,503.7 653.6,507.4 654.9,511.0 654.9,514.8 656.4,518.4 657.0,522.1 657.7,525.8 657.7,529.5 657.3,533.0 656.3,536.6 655.6,540.1 652.7,542.2 649.3,543.2 646.0,544.5" fill="none" stroke="#333" stroke-width="1" stroke-linejoin="round"/>
<polyline points="724.5,422.4 730.8,423.1 733.1,426.8 736.7,429.3 739.2,432.9 744.1,433.9 749.0,433.6 749.1,437.6 748.6,441.5 748.3,445.5 749.5,449.9 751.8,453.8 755.4,451.1 759.3,448.7 763.0,446.2 765.6,448.7 767.0,452.2 769.2,455.0 772.3,457.0 774.2,460.1 778.4,459.8 782.5,460.5 786.7,460.8 790.2,460.1 793.8,459.8 797.2,458.5 800.7,458.0 804.7,458.7 808.7,458.7 812.7,459.3 816.6,460.3 819.8,457.3 823.7,455.3 827.3,452.8 830.8,450.2 834.1,451.7 837.4,453.4 841.0,454.2 841.4,450.1 842.1,446.0 843.0,442.0 846.6,443.2 849.9,445.1 853.7,445.6 857.2,447.1" fill="none" stroke="#333" stroke-width="1" stroke-linejoin="round"/>
<polyline points="786.7,460.8 787.2,465.0 787.9,469.2 788.1,473.4 786.7,477.0 786.4,480.9 782.8,481.4 779.3,482.5 775.6,482.1 772.1,482.9 772.9,487.0 773.0,491.1 773.4,495.2 773.1,499.3 776.6,501.5 780.3,503.4 777.8,506.7 776.1,510.5 774.5,514.3 772.1,517.7 772.1,521.8 772.6,525.9 773.9,529.9 774.2,534.0 778.9,535.2 783.4,537.1 783.2,541.2 783.4,545.3" fill="none" stroke="#333" stroke-width="1" stroke-linejoin="round"/>
<polyline points="740.6,441.3 738.5,444.8 736.4,448.3 737.6,453.2 739.2,458.0 742.1,460.7 744.4,464.0 747.6,466.4 748.7,470.0 747.7,473.9 748.5,477.6 748.8,481.3 749.6,485.0 748.2,488.4 748.0,492.2 746.1,495.5 745.3,499.0 745.0,502.8 743.0,506.0 742.6,509.7 741.2,513.1 741.0,516.9 739.2,520.2 738.4,523.8 733.3,525.8 729.7,526.6 726.1,526.7 722.4,526.7 718.8,526.9 715.1,526.3 711.5,526.9 707.9,527.1 704.2,526.3 700.6,526.9 697.2,528.2 694.2,530.2 691.1,532.1 687.6,533.0 684.5,534.8 681.4,536.7 678.1,538.1 675.6,540.8 672.8,543.3 669.9,545.8 667.5,548.6 664.9,551.4 661.7,553.4 658.1,552.9 654.5,552.8 650.9,552.5 647.4,551.4 646.4,548.0 646.0,544.5" fill="none" stroke="#333" stroke-width="1" stroke-linejoin="round"/>
<polyline points="738.4,523.8 741.5,525.7 744.7,527.6 747.3,530.3 750.7,531.9 753.7,534.0 755.7,537.1 757.7,540.2 760.0,543.1 761.9,546.3 765.5,546.4 769.2,546.6 772.8,545.4 776.4,545.9 780.1,545.4 783.7,545.9 787.3,545.7 790.9,544.8 794.6,545.3 798.6,544.0 802.8,543.8 806.9,543.5 810.9,542.2 815.0,540.1" fill="none" stroke="#333" stroke-width="1" stroke-linejoin="round"/>
<polyline points="595.1,425.2 599.3,428.2 602.7,432.0 606.3,431.9 609.8,431.6 613.4,432.0 618.7,435.1 622.5,433.1 626.4,431.3 626.4,427.8 627.5,424.3 627.4,420.7 627.9,417.2 627.9,413.7 632.0,414.1 636.0,413.2 640.0,413.0 640.0,406.3" fill="none" stroke="#333" stroke-width="1" stroke-linejoin="round"/>
<polyline points="667.0,466.9 671.3,466.3 675.7,467.3 680.0,466.9" fill="none" stroke="#333" stroke-width="1" stroke-linejoin="round"/>
<polyline points="754.0,267.4 756.2,272.1 758.9,276.5 761.8,279.5 765.5,281.5 768.1,284.6 770.8,287.7 774.5,289.7 777.0,293.0 779.7,296.0 782.6,298.7 785.6,301.4 787.8,304.9 790.9,307.4 793.0,304.0 796.0,301.3 797.6,297.5 800.1,294.4 802.6,291.3 804.9,288.1 806.9,284.6 810.0,286.8 812.0,290.2 815.3,292.2 817.7,295.1 820.6,297.5 822.9,300.6 827.0,300.3 831.1,299.3 835.2,298.8 839.4,298.8 843.5,298.3 846.3,301.0 848.9,303.8 851.7,306.5 854.3,309.5 857.2,312.0 859.0,315.6 861.2,318.9 864.0,321.9 866.2,325.2 868.5,328.4 871.1,331.5 873.2,334.9 875.4,337.7 878.5,339.7 880.1,343.0 883.0,345.2 887.2,344.4 891.5,344.0 895.6,343.2 899.8,342.2 903.0,339.8 906.6,338.3 910.0,336.4 913.3,334.1 917.2,333.0 920.4,330.7 924.0,329.1 927.3,327.0 930.3,324.9 934.2,324.5 937.1,322.3 940.7,321.3 944.0,319.7 947.1,317.8 950.7,315.7 954.7,314.7" fill="none" stroke="#333" stroke-width="1" stroke-linejoin="round"/>
<polyline points="899.8,342.2 903.5,344.3 907.7,345.5 911.4,347.5 915.0,349.8 914.9,354.9 915.0,360.0 912.1,364.6 909.7,367.7 906.4,370.1 904.0,373.2 901.3,376.0 899.1,379.4 896.1,382.0 893.8,385.2 892.6,389.7 891.5,394.3" fill="none" stroke="#333" stroke-width="1" stroke-linejoin="round"/>
<polyline points="907.6,457.6 911.6,457.7 915.4,456.4 919.3,456.2 922.8,456.1 926.3,455.7 929.9,456.9 933.4,455.7 936.9,456.2 941.1,459.3 945.6,462.0 949.3,460.7 953.0,459.4 956.5,457.5 960.2,456.2 963.8,456.0 967.4,456.1 970.9,455.6 974.5,455.9 978.1,455.9 981.7,456.6 985.2,456.1 988.8,455.6 992.4,456.2" fill="none" stroke="#333" stroke-width="1" stroke-linejoin="round"/>
<polyline points="888.0,552.4 889.7,556.1 890.8,560.0 893.1,563.4 893.4,567.7 895.1,571.4 897.0,575.0 896.7,578.8 898.0,582.5 898.5,586.2 898.4,590.0 901.9,590.6 905.2,592.0 908.6,593.0 911.6,595.1 915.0,596.0 918.4,597.2 921.5,599.1 925.0,600.0" fill="none" stroke="#333" stroke-width="1" stroke-linejoin="round"/>
<polyline points="1020.3,423.3 1017.2,425.8 1013.5,427.1 1009.9,428.6 1007.0,431.3 1003.5,433.1 1001.9,436.3 1000.5,439.6 998.4,442.6 996.9,445.8 995.4,449.0 993.4,452.0 992.4,455.5 992.1,459.2 992.6,463.0 992.4,466.7 994.8,469.4 996.9,472.4 999.1,475.2 1002.0,477.6 1003.7,480.9 1006.3,483.4 1005.9,486.9 1005.0,490.4 1005.5,494.0 1004.7,497.4 1004.7,501.0 1003.7,504.4 1003.4,507.9 1002.8,511.4 1002.6,515.0 1001.2,518.3 1001.1,521.9 1000.8,525.4 999.3,528.9 997.4,532.2 996.1,535.8 993.4,538.8 991.7,542.2 990.4,545.8 989.3,549.5 986.5,552.4 985.4,556.1 987.4,559.5 989.2,563.0 990.3,566.9 992.0,570.4 993.0,574.3 995.5,577.5 996.6,581.3 997.2,585.0 996.7,588.8 997.2,592.5 996.4,596.3 996.6,600.0" fill="none" stroke="#333" stroke-width="1" stroke-linejoin="round"/>
<polyline points="818.9,396.6 815.1,396.0 811.4,394.7 807.7,393.8 806.7,390.1 805.4,386.5 804.5,382.8 803.2,379.2 802.1,375.6 799.3,370.0" fill="none" stroke="#333" stroke-width="1" stroke-linejoin="round"/>
<polygon points="157.1,179.5 157.8,176.3 159.2,173.4 162.7,172.2 166.3,172.4 169.6,172.2 172.8,170.5 176.2,170.9 179.5,170.3 181.5,174.4 184.6,174.1 187.6,173.5 190.7,174.4 194.1,173.0 197.1,170.8 200.8,170.3 202.9,168.3 205.9,168.2 209.0,167.4 212.1,167.5 215.1,168.3 218.1,165.6 221.2,163.2 225.2,166.3 228.4,164.8 230.4,161.6 233.3,159.7 236.4,158.1 238.8,160.1 241.0,162.4 244.0,163.6 246.6,165.2 250.0,165.4 253.2,166.9 256.7,166.3 260.2,164.9 263.9,165.2 265.1,161.7 264.9,158.1 267.4,156.4 269.9,154.8 272.6,153.4 275.5,152.4 278.6,151.9 281.0,150.0 281.3,146.1 282.8,142.6 287.4,141.7 290.6,144.0 293.9,146.2 297.4,148.1 299.3,146.3 299.3,143.2 300.0,140.2 300.2,137.1 303.2,136.2 306.3,136.2 309.3,137.1 311.8,135.4 315.0,135.0 317.6,133.5 321.2,132.7 324.9,132.1 326.7,136.2 330.0,136.8 333.1,138.1 334.0,142.6 332.5,145.5 331.4,148.6 330.3,151.7 328.6,154.5 331.3,157.3 334.6,156.3 337.5,154.6 340.4,152.7 339.5,156.4 338.1,159.4 335.7,161.8 334.0,164.6 334.0,170.1 335.8,172.6 337.1,175.4 339.5,177.4 342.5,179.2 346.1,179.8 348.7,182.4 352.3,182.9 355.3,181.8 358.4,182.1 361.5,182.0 364.5,181.0 366.7,178.5 369.7,177.6 372.0,175.3 375.2,174.7 377.9,172.6 380.5,170.5 382.6,167.9 385.5,166.0 387.2,162.9 389.9,160.9 392.6,162.7 395.5,164.0 398.4,165.5 401.4,166.7 404.2,168.3 407.0,166.8 409.5,164.9 411.3,162.2 415.4,162.6 419.5,163.2 422.5,168.3 425.1,170.0 428.4,170.2 430.7,172.4 434.1,172.8 437.4,172.7 440.8,172.4 444.9,168.3 448.4,167.6 451.0,165.2 454.1,165.8 457.1,164.8 460.1,165.0 463.2,165.2 466.9,163.2 470.3,160.7 474.0,159.7 477.8,160.6 481.5,160.7 484.1,163.7 485.5,167.3 488.2,169.9 490.3,172.9 491.6,176.4 493.2,180.1 496.3,182.8 497.7,186.6 502.0,187.6 505.9,189.6 510.9,192.7 514.0,193.8 516.7,196.0 520.0,196.7 523.2,195.5 526.7,195.8 530.0,195.5 533.7,195.8 537.3,196.6 541.0,196.7 544.7,196.2 547.1,199.1 550.5,200.8 553.8,202.0 556.8,203.8 559.8,205.5 563.6,204.8 567.6,205.5 571.4,204.3 575.4,204.4 579.0,202.1 583.0,202.0 585.4,199.2 588.7,197.4 591.9,197.2 595.0,197.6 598.0,198.5 601.5,198.5 605.0,198.7 608.5,198.0 612.0,198.5 614.6,200.9 615.4,204.3 618.4,205.3 621.2,206.6 624.7,206.3 628.1,206.7 631.6,206.6 635.0,208.0 638.5,207.9 642.0,208.1 645.5,208.8 649.0,209.0 652.2,208.2 654.8,205.8 658.2,205.5 662.5,205.1 666.3,203.2 668.7,200.0 670.8,196.6 672.1,192.7 676.3,191.8 680.0,189.7 683.3,187.2 686.8,185.0 688.3,181.2 690.2,177.5 691.6,172.0 693.9,169.6 697.2,168.8 699.3,166.2 702.5,165.2 706.3,164.1 710.1,164.2 714.0,164.5 717.5,168.3 721.0,166.1 725.0,165.2 726.6,167.9 728.5,170.5 730.0,173.4 731.1,176.3 731.8,179.5 736.5,176.8 740.0,181.6 745.4,179.5 746.8,176.0 749.5,173.4 753.2,173.8 756.9,173.8 760.4,175.4 760.3,178.7 761.7,181.6 765.8,182.0 770.0,182.0 773.5,181.6 776.8,182.2 780.2,183.0 780.8,186.0 781.1,189.1 781.2,192.2 783.2,195.2 786.4,196.1 788.5,198.9 791.1,200.6 794.4,201.3 797.9,200.7 801.5,200.3 802.6,203.4 804.4,206.2 804.6,209.5 804.3,212.8 802.8,215.7 801.5,218.6 804.9,216.7 808.6,215.6 811.5,216.9 814.9,216.3 817.8,217.6 821.4,219.2 823.3,223.0 826.9,224.7 828.9,227.3 831.5,229.4 832.9,232.4 835.0,234.9 838.5,235.6 841.1,237.9 844.5,238.0 847.9,238.9 851.3,237.9 852.0,234.5 851.7,231.2 851.3,227.8 854.3,226.7 856.4,229.5 857.9,232.7 859.4,235.9 862.5,235.5 865.5,236.9 868.5,236.7 871.6,236.9 874.8,238.5 878.5,238.6 881.8,240.0 885.4,240.5 888.4,242.6 892.0,243.0 892.2,246.4 893.5,249.4 895.3,252.2 897.6,254.5 900.2,256.2 902.9,257.8 906.1,258.7 908.4,260.9 911.1,262.4 913.6,264.4 916.3,262.4 919.4,261.2 922.6,260.5 925.8,259.8 929.1,258.9 932.5,259.3 935.9,259.3 939.1,257.9 942.5,257.5 942.2,261.0 942.6,264.3 944.1,267.5 941.4,269.3 940.4,272.4 938.6,275.0 936.6,277.4 934.7,279.8 932.7,282.2 930.3,284.2 930.1,287.2 930.3,290.3 930.7,294.0 932.0,297.4 933.8,300.6 934.9,304.1 934.9,308.6 938.6,310.4 942.5,311.7 945.4,313.0 948.8,312.4 951.6,314.3 954.7,314.7 959.0,313.2 962.4,310.2 966.9,313.2 967.9,316.2 969.5,318.8 971.5,321.2 973.0,323.9 976.0,323.3 979.1,323.9 981.3,326.4 984.4,327.7 986.8,330.0 990.0,331.7 993.3,333.2 997.1,333.3 1000.5,334.6 1003.7,335.9 1006.2,338.4 1009.7,339.1 1011.9,342.0 1015.2,343.8 1017.3,346.8 1020.7,347.6 1023.4,349.8 1027.5,350.7 1031.0,352.9 1032.6,356.9 1035.6,360.0 1035.0,363.4 1036.3,366.8 1034.9,370.1 1034.6,373.5 1035.5,376.9 1037.0,380.0 1035.0,382.6 1033.8,385.8 1031.7,388.3 1030.1,391.2 1030.8,394.6 1031.1,397.9 1029.2,401.3 1029.8,404.6 1030.1,408.0 1028.7,410.8 1026.5,413.2 1026.0,416.4 1023.8,418.8 1022.5,421.6 1021.7,424.7 1022.3,428.2 1022.2,431.7 1022.1,435.2 1021.7,438.7 1022.9,441.7 1022.9,444.9 1024.3,447.8 1024.7,451.0 1025.9,453.9 1025.1,457.4 1026.9,460.2 1027.4,463.3 1027.8,466.5 1028.7,469.5 1028.9,472.8 1030.7,475.7 1030.7,479.0 1032.4,481.9 1033.3,485.0 1034.3,488.1 1036.2,490.9 1036.3,494.3 1037.1,497.4 1038.8,500.0 1040.2,502.6 1039.8,506.0 1042.1,508.4 1042.6,511.4 1043.2,514.4 1044.6,517.0 1046.1,519.7 1046.9,522.6 1046.4,525.6 1045.9,528.6 1044.9,531.6 1045.8,534.8 1044.4,537.7 1044.6,540.8 1044.1,543.8 1042.6,546.7 1042.7,549.8 1042.1,552.8 1041.3,555.8 1041.3,558.9 1040.7,562.0 1041.9,565.0 1041.8,568.0 1042.2,571.0 1042.4,574.1 1042.3,577.1 1043.0,580.1 1043.1,583.2 1043.4,586.2 1042.8,589.3 1043.5,592.3 1044.1,595.3 1043.6,599.0 1043.7,602.7 1045.3,606.3 1045.0,610.0 1042.0,609.9 1039.0,609.1 1035.9,609.3 1032.9,610.7 1029.9,610.8 1026.9,610.1 1023.8,610.9 1020.8,610.5 1017.8,610.9 1014.8,609.7 1011.7,609.4 1008.7,609.2 1005.7,610.7 1002.7,609.6 999.6,609.7 996.6,610.7 993.6,609.2 990.6,609.1 987.5,610.6 984.5,609.1 981.5,610.2 978.5,610.0 975.4,609.0 972.4,609.3 969.4,610.7 966.4,610.1 963.3,610.0 960.3,610.3 957.3,610.6 954.3,610.4 951.2,609.6 948.2,611.0 945.2,609.9 942.2,610.1 939.1,611.0 936.1,610.3 933.1,609.8 930.1,610.0 927.0,610.9 924.0,609.0 921.0,609.4 918.0,609.1 914.9,610.8 911.9,610.5 908.9,610.9 905.9,609.4 902.8,610.5 899.8,610.7 896.8,610.2 893.8,609.2 890.7,609.4 887.7,610.5 884.7,610.7 881.7,609.2 878.6,609.9 875.6,609.6 872.6,610.0 871.8,606.7 871.7,603.3 872.6,600.0 871.5,597.0 869.5,594.4 867.4,591.9 867.5,588.3 865.5,585.7 864.3,582.7 861.6,580.5 861.5,577.0 859.4,574.5 859.1,570.9 861.3,567.6 861.1,564.0 861.5,560.4 862.4,557.0 865.7,556.7 869.2,557.0 872.3,555.3 875.6,554.6 879.0,554.9 882.3,553.9 885.7,554.0 885.9,550.9 886.9,548.0 887.6,545.0 888.8,542.2 889.9,539.3 890.8,536.4 892.6,533.8 893.0,530.7 892.3,527.6 892.5,524.4 891.6,521.2 891.7,518.1 890.8,514.9 891.1,511.7 890.3,508.6 891.5,505.3 890.9,502.2 890.0,499.1 890.3,495.9 890.1,492.7 888.2,490.1 884.7,489.4 882.8,486.9 884.1,483.7 883.9,480.2 884.7,476.9 886.0,473.7 885.7,470.1 886.6,466.8 887.2,463.5 890.2,463.0 893.3,462.7 895.9,460.7 899.0,460.8 901.9,459.7 904.8,458.7 907.6,457.6 909.7,455.3 911.8,453.0 913.6,450.4 916.4,448.9 916.4,445.5 916.9,442.3 918.9,439.4 918.7,435.9 919.2,432.7 919.7,429.4 921.2,426.4 920.9,422.9 920.0,419.6 918.6,416.5 916.9,413.4 915.8,410.2 915.0,406.9 914.4,403.5 912.1,400.9 909.4,398.7 907.7,395.7 905.2,393.3 903.3,390.4 899.7,390.0 896.3,390.5 893.0,391.9 890.2,393.4 887.6,395.5 884.6,396.6 882.8,399.2 883.3,402.5 882.3,405.4 882.1,408.5 880.5,411.2 879.5,414.0 878.6,416.9 878.3,420.0 876.9,422.7 877.0,425.9 875.6,428.6 875.1,431.6 873.6,434.4 872.6,437.2 870.2,440.0 867.3,442.1 864.1,443.6 861.2,445.8 858.0,447.4 858.5,451.1 859.3,454.7 860.0,458.4 858.4,461.4 857.4,464.7 856.1,467.9 854.6,471.0 854.4,474.5 853.3,477.8 851.8,480.9 850.5,483.8 851.7,487.1 850.2,490.0 850.0,493.1 850.8,496.3 849.5,499.3 848.5,502.3 848.1,505.4 848.3,508.5 847.8,511.5 847.4,514.6 847.7,517.7 844.6,519.0 841.3,518.8 838.1,519.4 834.7,519.4 831.5,520.0 828.3,520.6 825.2,521.8 823.0,524.4 820.5,526.8 818.8,529.7 816.8,532.4 815.5,535.7 813.0,538.1 815.0,542.2 812.0,544.1 808.7,544.9 805.3,545.5 802.2,547.0 798.7,547.3 797.5,550.2 797.6,553.2 796.9,556.2 796.4,559.2 795.8,562.2 795.7,565.2 796.1,568.4 794.0,571.1 793.6,574.1 793.6,577.1 793.0,580.1 792.6,583.1 791.3,585.8 791.3,589.0 789.1,591.4 788.9,594.5 788.2,597.5 786.4,600.0 786.9,603.3 785.9,606.7 786.4,610.0 783.4,610.6 780.3,609.5 777.3,609.0 774.2,610.0 771.2,610.2 768.1,610.0 765.1,609.6 762.1,609.5 759.0,609.8 756.0,609.7 752.9,610.8 749.9,610.7 746.8,610.5 743.8,609.5 740.8,610.4 737.7,609.9 734.7,611.0 731.6,610.9 728.6,610.5 725.5,609.7 722.5,609.6 719.5,609.6 716.4,610.4 713.4,610.0 710.3,610.1 707.3,610.1 704.3,610.8 701.2,609.2 698.2,610.6 695.1,609.0 692.1,609.1 689.0,611.0 686.0,610.1 683.0,609.4 679.9,609.1 676.9,610.1 673.8,610.5 670.8,610.6 667.7,609.1 664.7,610.0 664.1,606.8 664.9,603.6 664.0,600.5 664.7,597.3 662.8,594.6 661.6,591.4 659.0,589.3 656.0,588.2 654.2,585.3 651.3,584.1 649.1,581.8 646.4,580.4 643.3,579.5 641.4,576.7 638.4,575.6 639.2,572.3 639.1,568.8 639.9,565.5 641.6,562.5 642.4,559.2 642.9,555.9 644.1,552.7 644.6,548.5 646.4,544.7 644.1,546.7 641.6,548.4 638.6,549.3 637.0,552.4 633.7,552.9 631.5,555.0 628.4,555.4 626.0,557.7 622.6,557.2 619.9,558.6 616.9,559.2 614.5,561.4 611.5,562.2 608.6,563.0 605.6,561.6 603.4,559.0 600.1,558.1 597.1,556.9 594.3,555.3 591.3,553.9 588.2,552.8 585.8,550.4 583.3,548.2 582.8,544.8 580.0,542.8 579.3,539.4 576.4,537.6 574.6,535.0 573.2,532.1 574.0,528.3 574.1,524.4 575.5,520.7 578.8,518.9 582.7,518.5 585.8,516.1 588.4,518.0 591.4,519.0 594.4,519.8 597.1,521.4 600.0,522.6 603.2,523.1 606.0,524.5 609.4,524.4 612.0,526.4 613.8,523.7 614.6,520.6 616.5,518.0 617.6,515.1 618.3,511.9 620.0,509.2 616.7,508.3 614.7,505.1 611.1,504.7 608.6,502.4 605.8,500.5 602.9,498.7 600.1,496.8 597.8,494.1 595.3,491.8 591.7,491.0 589.2,488.6 590.1,485.2 590.0,481.7 591.0,478.3 591.5,474.9 593.1,471.8 594.5,468.6 596.3,465.6 598.1,462.7 600.4,460.0 600.4,454.9 598.1,452.7 595.1,451.9 595.1,448.9 595.1,445.8 598.9,444.2 598.9,439.7 596.9,435.7 595.9,431.3 592.8,430.7 589.7,430.8 586.7,432.0 586.7,426.7 590.9,425.5 595.1,424.4 595.1,419.8 591.7,419.0 588.7,417.5 585.6,416.3 582.9,414.1 580.6,411.9 578.7,409.2 577.7,406.2 577.9,403.1 578.3,400.0 579.5,398.0 580.9,395.0 583.2,392.6 585.6,390.3 587.2,387.4 588.4,384.3 590.4,381.7 592.7,379.7 595.3,378.0 594.9,374.3 594.3,370.7 594.1,367.0 591.1,366.8 588.0,366.8 585.1,365.9 582.4,364.0 579.1,365.1 576.3,363.8 573.3,363.3 570.3,360.9 567.1,359.0 563.3,358.7 559.8,360.5 556.1,360.8 552.4,360.8 549.5,362.2 546.4,362.8 543.3,363.7 540.2,364.5 536.9,365.9 534.2,368.2 531.4,370.4 529.1,373.1 530.1,376.8 529.1,380.5 534.0,382.9 532.9,386.4 530.3,389.0 527.1,389.7 523.9,390.4 521.2,392.3 518.1,393.3 515.3,391.9 512.0,391.8 509.5,389.7 504.6,392.7 501.0,395.3 497.2,397.6 494.7,394.5 491.1,392.7 487.6,391.3 483.9,390.4 480.1,390.3 475.9,388.7 471.5,389.0 470.4,386.0 470.3,382.9 466.6,381.7 464.6,378.3 464.1,374.3 461.7,372.3 460.5,369.4 457.9,367.8 455.4,365.9 453.1,363.9 450.2,362.7 447.5,361.3 445.0,359.5 442.1,358.4 438.4,354.1 434.8,355.6 431.0,356.9 427.4,358.4 424.8,360.7 421.0,360.9 418.5,363.4 414.8,363.7 412.0,365.7 409.1,367.5 410.0,370.7 410.8,373.9 410.5,377.3 410.6,380.7 409.5,383.9 409.1,387.2 409.9,390.6 409.6,394.0 408.4,397.2 407.9,400.5 407.7,403.8 405.3,406.3 402.9,408.9 399.9,410.7 398.1,413.9 395.1,415.8 392.3,417.8 390.2,420.6 389.8,417.1 389.5,413.6 386.6,411.4 383.1,410.5 379.7,409.4 377.9,406.1 374.8,403.9 372.0,401.4 370.0,398.3 368.9,395.3 369.8,392.0 368.7,389.0 367.4,386.0 367.2,382.9 365.0,385.3 361.9,386.0 359.0,387.2 356.6,389.1 354.1,391.0 351.0,391.8 348.1,392.9 346.1,395.6 343.6,397.5 340.6,398.5 337.8,399.7 334.8,401.2 331.5,402.1 328.8,404.4 325.2,404.7 322.4,406.6 320.4,404.0 317.8,402.0 315.5,399.7 317.8,395.8 321.0,392.7 321.3,389.0 319.7,385.7 317.0,384.3 315.2,381.7 312.0,380.9 309.9,378.7 307.8,376.5 307.0,373.4 304.5,371.4 303.9,368.1 301.5,366.1 302.2,362.6 302.9,359.1 300.3,355.9 298.7,352.1 295.5,352.1 292.4,351.2 289.3,350.2 286.1,350.0 282.6,349.1 279.1,350.7 275.6,350.2 272.1,350.0 268.7,351.3 265.0,350.5 261.8,352.8 258.2,352.8 255.0,353.5 251.9,353.3 248.7,352.5 245.6,352.1 248.4,349.1 249.8,345.2 253.7,343.8 256.8,341.0 258.0,337.6 258.2,334.0 261.4,334.6 264.5,334.2 267.5,332.6 270.7,332.6 269.3,328.4 266.5,326.0 265.4,322.2 262.4,320.0 265.0,317.6 266.0,314.0 268.9,311.9 267.6,309.0 265.6,306.4 264.1,303.7 262.4,300.9 260.6,298.3 258.8,295.7 258.1,292.4 255.8,290.0 254.1,287.2 253.1,283.8 250.5,281.6 247.1,280.1 245.1,276.5 241.2,275.6 238.6,273.0 233.0,272.5 231.2,269.8 230.6,266.5 228.5,264.0 226.8,268.1 226.4,272.5 223.6,274.1 221.1,276.2 217.8,276.9 214.6,277.4 211.4,278.0 208.0,277.3 204.9,279.2 201.6,279.0 199.1,276.7 197.5,273.5 194.0,272.3 192.2,269.3 190.5,266.3 188.1,263.9 185.4,261.8 182.0,260.4 179.0,258.2 176.7,255.3 176.3,252.1 178.4,249.3 177.5,246.1 178.9,243.1 178.9,240.0 177.4,236.2 174.3,233.5 172.4,230.0 170.4,227.3 169.3,224.2 171.2,220.9 171.4,217.1 172.1,213.1 172.4,209.0 170.6,205.8 170.1,202.0 168.3,198.8 166.9,195.9 165.8,192.8 164.3,190.0 164.7,186.4 164.0,183.3 162.2,180.5" fill="none" stroke="#1a1a1a" stroke-width="1.1" stroke-linejoin="round"/>
<text x="230" y="213.5" font-size="11" fill="#7c7c7c" font-family="Liberation Sans, sans-serif">甘溪滩镇</text>
<text x="416" y="245" font-size="11" fill="#7c7c7c" font-family="Liberation Sans, sans-serif">火连坡镇</text>
<text x="474" y="246" font-size="11" fill="#7c7c7c" font-family="Liberation Sans, sans-serif">天供山林场</text>
<text x="543" y="270.5" font-size="11" fill="#7c7c7c" font-family="Liberation Sans, sans-serif">金罗镇</text>
<text x="680" y="239" font-size="11" fill="#7c7c7c" font-family="Liberation Sans, sans-serif">盐井镇</text>
<text x="827" y="285" font-size="11" fill="#7c7c7c" font-family="Liberation Sans, sans-serif">复兴镇</text>
<text x="762" y="336.6" font-size="11" fill="#7c7c7c" font-family="Liberation Sans, sans-serif">梦溪镇</text>
<text x="311" y="339.6" font-size="11" fill="#7c7c7c" font-family="Liberation Sans, sans-serif">码头铺镇</text>
<text x="478" y="332" font-size="11" fill="#7c7c7c" font-family="Liberation Sans, sans-serif">王家厂镇</text>
<text x="622" y="364" font-size="11" fill="#7c7c7c" font-family="Liberation Sans, sans-serif">大堰垱镇</text>
<text x="782" y="416" font-size="11" fill="#7c7c7c" font-family="Liberation Sans, sans-serif">涔南镇</text>
<text x="940.5" y="390" font-size="11" fill="#7c7c7c" font-family="Liberation Sans, sans-serif">如东镇</text>
<text x="603" y="478" font-size="11" fill="#7c7c7c" font-family="Liberation Sans, sans-serif">城头山镇</text>
<text x="666" y="482" font-size="11" fill="#7c7c7c" font-family="Liberation Sans, sans-serif">澧西街道</text>
<text x="731" y="479" font-size="11" fill="#7c7c7c" font-family="Liberation Sans, sans-serif">澧阳街道</text>
<text x="735" y="498" font-size="11" fill="#7c7c7c" font-family="Liberation Sans, sans-serif">澧浦街道</text>
<text x="787" y="499" font-size="11" fill="#7c7c7c" font-family="Liberation Sans, sans-serif">澧澹街道</text>
<text x="913" y="562" font-size="11" fill="#7c7c7c" font-family="Liberation Sans, sans-serif">小渡口镇</text>
<text x="1016" y="596.5" font-size="11" fill="#7c7c7c" font-family="Liberation Sans, sans-serif">官垸镇</text>
<text x="716" y="599" font-size="11" fill="#7c7c7c" font-family="Liberation Sans, sans-serif">澧南镇</text>
<text x="283" y="341" font-size="11" fill="#8fc2f3" font-family="Liberation Sans, sans-serif">涔</text>
<text x="329" y="375" font-size="11" fill="#8fc2f3" font-family="Liberation Sans, sans-serif">水</text>
<text x="383" y="346" font-size="11" fill="#8fc2f3" font-family="Liberation Sans, sans-serif">南</text>
<text x="373" y="230" font-size="11" fill="#8fc2f3" font-family="Liberation Sans, sans-serif">涔</text>
<text x="725" y="359" font-size="11" fill="#8fc2f3" font-family="Liberation Sans, sans-serif">水</text>
<text x="828" y="471" font-size="11" fill="#8fc2f3" font-family="Liberation Sans, sans-serif">水</text>
<text x="743" y="537" font-size="11" fill="#8fc2f3" font-family="Liberation Sans, sans-serif">水</text>
<text x="754" y="588" font-size="11" fill="#8fc2f3" font-family="Liberation Sans, sans-serif">水</text>
<text x="649" y="537" font-size="11" fill="#8fc2f3" font-family="Liberation Sans, sans-serif">澧</text>
<text x="1005" y="373" font-size="11" fill="#8fc2f3" font-family="Liberation Sans, sans-serif">松</text>
<text x="990" y="443" font-size="11" fill="#8fc2f3" font-family="Liberation Sans, sans-serif">澧</text>
<text x="993" y="557" font-size="11" fill="#8fc2f3" font-family="Liberation Sans, sans-serif">西</text>
<circle cx="463.4" cy="197" r="7.6" fill="url(#ball)"/>
<text x="476.4" y="204.2" font-size="16" font-weight="bold" fill="#000" font-family="Liberation Serif, serif" textLength="66.2" lengthAdjust="spacing">山门水库</text>
<text x="441.8" y="223.5" font-size="16" font-weight="bold" fill="#0000ff" font-family="Liberation Serif, serif" textLength="43" lengthAdjust="spacing" xml:space="preserve">65. 75</text>
<circle cx="745.8" cy="249.8" r="7.6" fill="url(#ball)"/>
<text x="758.8" y="257.0" font-size="16" font-weight="bold" fill="#000" font-family="Liberation Serif, serif" textLength="66.2" lengthAdjust="spacing">盐井水库</text>
<text x="726.4" y="277.6" font-size="16" font-weight="bold" fill="#0000ff" font-family="Liberation Serif, serif" textLength="43" lengthAdjust="spacing" xml:space="preserve">28. 08</text>
<circle cx="464.8" cy="315.9" r="7.6" fill="url(#ball)"/>
<text x="477.8" y="322.5" font-size="16" font-weight="bold" fill="#000" font-family="Liberation Serif, serif" textLength="83.0" lengthAdjust="spacing">王家厂水库</text>
<text x="445.4" y="343.5" font-size="16" font-weight="bold" fill="#0000ff" font-family="Liberation Serif, serif" textLength="43" lengthAdjust="spacing" xml:space="preserve">14. 40</text>
<circle cx="621.6" cy="313.3" r="7.6" fill="url(#ball)"/>
<text x="634.6" y="321.0" font-size="16" font-weight="bold" fill="#000" font-family="Liberation Serif, serif" textLength="83.0" lengthAdjust="spacing">石公桥水库</text>
<text x="601" y="340.3" font-size="16" font-weight="bold" fill="#0000ff" font-family="Liberation Serif, serif" textLength="43" lengthAdjust="spacing" xml:space="preserve">82. 96</text>
<circle cx="820.2" cy="321.2" r="7.6" fill="url(#ball)"/>
<text x="833.2" y="327.8" font-size="16" font-weight="bold" fill="#000" font-family="Liberation Serif, serif" textLength="83.0" lengthAdjust="spacing">赵家峪水库</text>
<text x="801.2" y="347.7" font-size="16" font-weight="bold" fill="#0000ff" font-family="Liberation Serif, serif" textLength="43" lengthAdjust="spacing" xml:space="preserve">85. 10</text>
<polygon points="733.3,502.5 735.0,507.2 740.0,507.3 736.1,510.4 737.4,515.2 733.3,512.4 729.2,515.2 730.5,510.4 726.6,507.3 731.6,507.2" fill="#ff0000"/>
<text x="741.5" y="512" font-size="11" font-weight="bold" fill="#ff0000" font-family="Liberation Sans, sans-serif">澧县</text>
</svg>
<div class="a" style="left:1181px;top:131px;width:33px;height:24px;background:#d5e2f0;border-radius:0 0 3px 3px"></div>
<svg class="a" style="left:1183px;top:134px" width="4" height="18" viewBox="0 0 4 18"><g fill="#9aa6b4"><rect x="0.5" y="0.8" width="1.6" height="1.6"/><rect x="0.5" y="4.6" width="1.6" height="1.6"/><rect x="0.5" y="8.4" width="1.6" height="1.6"/><rect x="0.5" y="12.2" width="1.6" height="1.6"/></g><g fill="#fff"><rect x="1.6" y="1.9" width="1.2" height="1.2"/><rect x="1.6" y="5.7" width="1.2" height="1.2"/><rect x="1.6" y="9.5" width="1.2" height="1.2"/><rect x="1.6" y="13.3" width="1.2" height="1.2"/></g></svg>
<svg class="a" style="left:1191px;top:134px" width="19" height="19" viewBox="0 0 19 19"><defs><radialGradient id="gb" cx="0.45" cy="0.35" r="0.7"><stop offset="0" stop-color="#b6e3a6"/><stop offset="0.7" stop-color="#6cbd5a"/><stop offset="1" stop-color="#4a9a3c"/></radialGradient></defs><circle cx="9.3" cy="9.1" r="8.3" fill="url(#gb)"/><circle cx="9.3" cy="9.1" r="6.6" fill="none" stroke="#9fd58f" stroke-width="0.8"/><path d="M9.3 5.3V12.9M5.5 9.1H13.1" stroke="#fff" stroke-width="2.4"/></svg>
<div id="rpanel" class="a"></div>
<div class="a" style="left:1239px;top:133px;height:17px;line-height:17px;font-size:12px;color:#1a1a1a;letter-spacing:-0.7px">水库可增容</div>
<svg class="a" style="left:1437px;top:135px" width="10" height="11" viewBox="0 0 10 11"><path d="M2.5 1H7.5M3.5 1V6.5M6.5 1V6.5M1.5 6.5H8.5M5 6.5V10.5" stroke="#111" stroke-width="1.3" fill="none"/><rect x="5.6" y="1.5" width="1.4" height="5" fill="#111"/></svg>
<svg class="a" style="left:1453px;top:136px" width="10" height="10" viewBox="0 0 10 10"><path d="M1.2 1.2L8.8 8.8M8.8 1.2L1.2 8.8" stroke="#111" stroke-width="1.5"/></svg>
<div class="a" style="left:1235px;top:155px;width:231px;height:1px;background:#e6ebf1"></div>
<div class="a" style="left:1239px;top:146px;height:17px;line-height:17px;font-size:12px;color:#1a1a1a;background:#d6e3f1;padding:0 2px;letter-spacing:1.2px">查 询</div>
<div class="a" style="left:1237px;top:171px;width:228px;height:140px;border:1px solid #e2e9f1;border-right-color:#c9d6e4;border-bottom-color:#c9d6e4"></div>
<div class="a" style="left:1247px;top:186px;height:17px;line-height:17px;font-size:12px;color:#111;letter-spacing:0px">日 期</div>
<div class="a" style="left:1278px;top:183px;width:109px;height:21px;background:#fff;border:1px solid #a9a9a9"></div>
<div class="a" style="left:1280px;top:185px;height:17px;line-height:17px;font-size:12px;color:#000;letter-spacing:-0.4px">2019年&nbsp;&nbsp;5月24日</div>
<svg class="a" style="left:1373px;top:190px" width="9" height="6" viewBox="0 0 9 6"><path d="M0.5 0.8L4.5 4.8L8.5 0.8" stroke="#555" stroke-width="1" fill="none"/></svg>
<div class="a" style="left:1389px;top:184px;width:42px;height:20px;background:#fff;border:1px solid #a9a9a9"></div>
<div class="a" style="left:1390px;top:185px;height:16px;line-height:16px;font-size:11px;color:#000;letter-spacing:-0.5px">08</div>
<svg class="a" style="left:1418px;top:191px" width="9" height="6" viewBox="0 0 9 6"><path d="M0.5 0.8L4.5 4.8L8.5 0.8" stroke="#555" stroke-width="1" fill="none"/></svg>
<div class="a" style="left:1435px;top:186px;height:17px;line-height:17px;font-size:12px;color:#111">时</div>
<div class="a" style="left:1246px;top:231px;width:13px;height:13px;background:#fff;border:1px solid #333"></div>
<svg class="a" style="left:1247px;top:232px" width="11" height="11" viewBox="0 0 11 11"><path d="M2 5.5L4.5 8.3L9.3 2.5" stroke="#222" stroke-width="1.2" fill="none"/></svg>
<div class="a" style="left:1263px;top:229px;height:17px;line-height:17px;font-size:12px;color:#111">至</div>
<div class="a" style="left:1278px;top:226px;width:109px;height:21px;background:#fff;border:1px solid #a9a9a9"></div>
<div class="a" style="left:1280px;top:228px;height:17px;line-height:17px;font-size:12px;color:#000;letter-spacing:-0.4px">2019年&nbsp;&nbsp;5月25日</div>
<svg class="a" style="left:1373px;top:233px" width="9" height="6" viewBox="0 0 9 6"><path d="M0.5 0.8L4.5 4.8L8.5 0.8" stroke="#555" stroke-width="1" fill="none"/></svg>
<div class="a" style="left:1389px;top:227px;width:42px;height:20px;background:#fff;border:1px solid #a9a9a9"></div>
<div class="a" style="left:1390px;top:228px;height:16px;line-height:16px;font-size:11px;color:#000;letter-spacing:-0.5px">08</div>
<svg class="a" style="left:1418px;top:234px" width="9" height="6" viewBox="0 0 9 6"><path d="M0.5 0.8L4.5 4.8L8.5 0.8" stroke="#555" stroke-width="1" fill="none"/></svg>
<div class="a" style="left:1435px;top:229px;height:17px;line-height:17px;font-size:12px;color:#111">时</div>
<div class="a" style="left:1263px;top:275px;width:13px;height:13px;background:#fff;border:1px solid #333"></div>
<svg class="a" style="left:1264px;top:276px" width="11" height="11" viewBox="0 0 11 11"><path d="M2 5.5L4.5 8.3L9.3 2.5" stroke="#222" stroke-width="1.2" fill="none"/></svg>
<div class="a" style="left:1280px;top:273px;height:17px;line-height:17px;font-size:12px;color:#111">列表</div>
<div class="a" style="left:1332px;top:274px;width:90px;height:22px;background:linear-gradient(#f2f6fb,#d9e4f0);border:1px solid #8fa4bd;border-radius:3px;box-shadow:inset 0 0 0 1px #fafcfe"></div>
<svg class="a" style="left:1355px;top:277px" width="16" height="16" viewBox="0 0 16 16"><rect x="0.5" y="0.5" width="13" height="13" fill="#6fb0d8" stroke="#3d7fb2"/><path d="M1 1H7L5 7L8 13H1Z" fill="#f0c040"/><path d="M7 1H13V13H8L5 7Z" fill="#7cc06a"/><circle cx="10" cy="10" r="3.3" fill="#cfe8f7" stroke="#3a6f9a"/><path d="M12.3 12.3L15 15" stroke="#e8a020" stroke-width="2"/></svg>
<div class="a" style="left:1375px;top:277px;height:17px;line-height:17px;font-size:12px;color:#111">查询</div>
<div id="gap" class="a"></div>
<div id="outt" class="a"></div>
<div class="a" style="left:5px;top:603px;height:17px;line-height:17px;font-size:12px;color:#111;letter-spacing:-0.8px">输出窗口</div>
<svg class="a" style="left:1437px;top:605px" width="10" height="11" viewBox="0 0 10 11"><path d="M2.5 1H7.5M3.5 1V6.5M6.5 1V6.5M1.5 6.5H8.5M5 6.5V10.5" stroke="#111" stroke-width="1.3" fill="none"/><rect x="5.6" y="1.5" width="1.4" height="5" fill="#111"/></svg>
<svg class="a" style="left:1453px;top:606px" width="10" height="10" viewBox="0 0 10 10"><path d="M1.2 1.2L8.8 8.8M8.8 1.2L1.2 8.8" stroke="#111" stroke-width="1.5"/></svg>
<div id="tbl" class="a"></div>
<div class="a cell" style="left:7px;top:624px;height:17px;line-height:17px">编号</div>
<div class="a cell" style="left:221px;top:624px;height:17px;line-height:17px">名称</div>
<div class="a cell" style="left:514px;top:624px;height:17px;line-height:17px">可增容</div>
<div class="a cell" style="left:737px;top:624px;height:17px;line-height:17px">经度</div>
<div class="a cell" style="left:971px;top:624px;height:17px;line-height:17px">纬度</div>
<div class="a" style="left:215px;top:621px;width:1px;height:141px;background:#e3e3e3"></div>
<div class="a" style="left:509px;top:621px;width:1px;height:141px;background:#e3e3e3"></div>
<div class="a" style="left:732px;top:621px;width:1px;height:141px;background:#e3e3e3"></div>
<div class="a" style="left:966px;top:621px;width:1px;height:141px;background:#e3e3e3"></div>
<div class="a" style="left:1289px;top:621px;width:1px;height:141px;background:#e3e3e3"></div>
<div class="a" style="left:1px;top:659px;width:1466px;height:1px;background:#ececec"></div>
<div class="a" style="left:1px;top:674px;width:1466px;height:1px;background:#ececec"></div>
<div class="a" style="left:1px;top:689px;width:1466px;height:1px;background:#ececec"></div>
<div class="a" style="left:1px;top:704px;width:1466px;height:1px;background:#ececec"></div>
<div class="a" style="left:1px;top:719.5px;width:1466px;height:1px;background:#ececec"></div>
<div class="a" style="left:1px;top:735px;width:1466px;height:1px;background:#ececec"></div>
<div class="a" style="left:1px;top:750.5px;width:1466px;height:1px;background:#ececec"></div>
<div class="a" style="left:6px;top:644px;width:1283px;height:14px;border:1px dotted #333;border-bottom:none"></div>
<div class="a num" style="left:7px;top:645px">0</div>
<div class="a cell" style="left:221px;top:644px;font-size:12px;height:15px;line-height:15px;letter-spacing:-0.5px">王家厂水库</div>
<div class="a num" style="left:514px;top:645px">14<span style="margin:0 1.5px 0 1.5px">.</span>40</div>
<div class="a num" style="left:737px;top:645px">111<span style="margin:0 1.5px 0 1.5px">.</span>5</div>
<div class="a num" style="left:971px;top:645px">29<span style="margin:0 1.5px 0 1.5px">.</span>8</div>
<div class="a num" style="left:7px;top:660px">1</div>
<div class="a cell" style="left:221px;top:659px;font-size:12px;height:15px;line-height:15px;letter-spacing:-0.5px">山门水库</div>
<div class="a num" style="left:514px;top:660px">65<span style="margin:0 1.5px 0 1.5px">.</span>75</div>
<div class="a num" style="left:737px;top:660px">111<span style="margin:0 1.5px 0 1.5px">.</span>5</div>
<div class="a num" style="left:971px;top:660px">29<span style="margin:0 1.5px 0 1.5px">.</span>9</div>
<div class="a num" style="left:7px;top:675px">2</div>
<div class="a cell" style="left:221px;top:674px;font-size:12px;height:15px;line-height:15px;letter-spacing:-0.5px">赵家峪水库</div>
<div class="a num" style="left:514px;top:675px">85<span style="margin:0 1.5px 0 1.5px">.</span>10</div>
<div class="a num" style="left:737px;top:675px">111<span style="margin:0 1.5px 0 1.5px">.</span>84</div>
<div class="a num" style="left:971px;top:675px">29<span style="margin:0 1.5px 0 1.5px">.</span>79</div>
<div class="a num" style="left:7px;top:690px">3</div>
<div class="a cell" style="left:221px;top:689px;font-size:12px;height:15px;line-height:15px;letter-spacing:-0.5px">盐井水库</div>
<div class="a num" style="left:514px;top:690px">28<span style="margin:0 1.5px 0 1.5px">.</span>08</div>
<div class="a num" style="left:737px;top:690px">111<span style="margin:0 1.5px 0 1.5px">.</span>77</div>
<div class="a num" style="left:971px;top:690px">29<span style="margin:0 1.5px 0 1.5px">.</span>85</div>
<div class="a num" style="left:7px;top:705px">4</div>
<div class="a cell" style="left:221px;top:704px;font-size:12px;height:15px;line-height:15px;letter-spacing:-0.5px">石公桥水库</div>
<div class="a num" style="left:514px;top:705px">82<span style="margin:0 1.5px 0 1.5px">.</span>96</div>
<div class="a num" style="left:737px;top:705px">111<span style="margin:0 1.5px 0 1.5px">.</span>65</div>
<div class="a num" style="left:971px;top:705px">29<span style="margin:0 1.5px 0 1.5px">.</span>8</div>
<div id="status" class="a"></div>
<div class="a" style="left:7px;top:767px;height:17px;line-height:17px;font-size:12px;color:#111;letter-spacing:0.2px">经度:112°6'27"</div>
<div class="a" style="left:247px;top:767px;height:17px;line-height:17px;font-size:12px;color:#111;letter-spacing:0.2px">纬度:29°37'32"</div>
</body></html>
